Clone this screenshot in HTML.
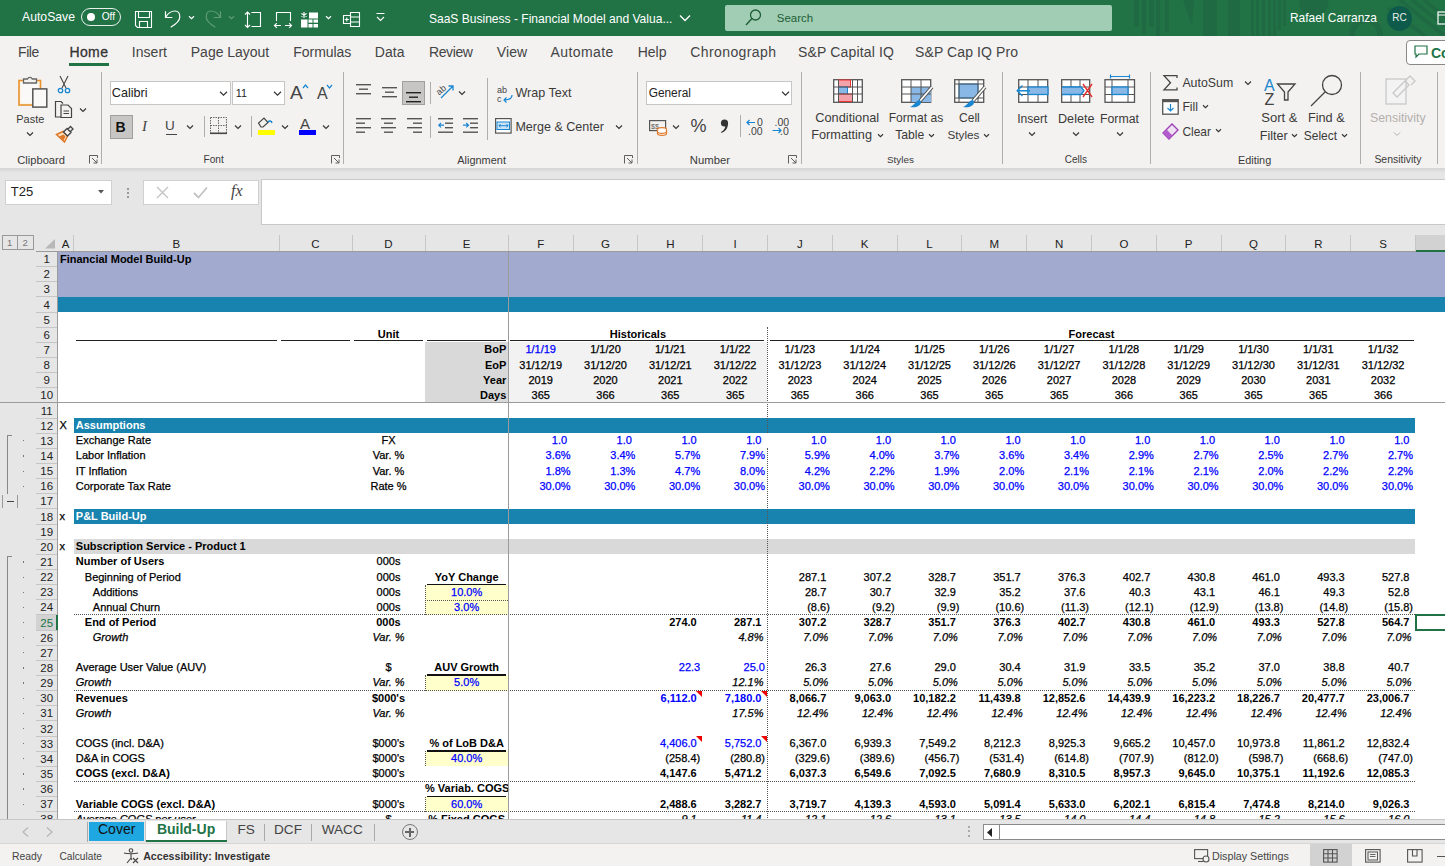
<!DOCTYPE html>
<html><head><meta charset="utf-8"><style>
*{margin:0;padding:0}
html,body{width:1445px;height:866px;overflow:hidden;background:#e6e6e6;position:relative;font-family:"Liberation Sans",sans-serif}
.a{position:absolute;white-space:nowrap}
.r{position:absolute}
.c{position:absolute;height:15.14px;line-height:15.14px;font-size:11px;color:#000;white-space:nowrap;overflow:visible;-webkit-text-stroke:0.25px currentColor}
.b{font-weight:bold;-webkit-text-stroke:0}
.i{font-style:italic}
svg{position:absolute;overflow:visible}

.tb{left:0;top:0;width:1445px;height:36px;background:#217346}
.rib{left:0;top:36px;width:1445px;height:132px;background:#f3f2f1}
.menu{font-size:14px;color:#444;top:43px;line-height:18px}
.lbl{font-size:12px;color:#3b3a39;line-height:14px}
.sep{position:absolute;width:1px;background:#b0aeac}
.wt{color:#fff}
</style></head>
<body>
<div class="r tb"></div>
<div class="r" style="left:1134.3px;top:0;width:4.4px;height:27px;background:#1f6a42"></div>
<div class="r" style="left:1142.2px;top:0;width:3.8px;height:34px;background:#1f6a42"></div>
<div class="r" style="left:1149.3px;top:0;width:4.3px;height:27px;background:#1f6a42"></div>
<div class="r" style="left:1156.4px;top:0;width:4.1px;height:36px;background:#1f6a42"></div>
<div class="r" style="left:1164.8px;top:0;width:4.0px;height:32px;background:#1f6a42"></div>
<div class="r" style="left:1203.4px;top:0;width:13.7px;height:36px;background:#1f6a42"></div>
<div class="r" style="left:1227.7px;top:0;width:12.5px;height:36px;background:#1f6a42"></div>
<div class="r" style="left:1250.8px;top:0;width:3.1px;height:36px;background:#1f6a42"></div>
<div class="r" style="left:1256.4px;top:0;width:3.1px;height:36px;background:#1f6a42"></div>
<div class="r" style="left:1262px;top:0;width:3.0px;height:36px;background:#1f6a42"></div>
<div class="r" style="left:1267.6px;top:0;width:3.1px;height:36px;background:#1f6a42"></div>
<div class="r" style="left:1272.5px;top:0;width:3.2px;height:36px;background:#1f6a42"></div>
<div class="r" style="left:1278px;top:0;width:2.5px;height:30px;background:#1f6a42"></div>
<div class="r" style="left:1283px;top:0;width:2.5px;height:26px;background:#1f6a42"></div>
<svg style="left:1120px;top:0" width="325" height="36" viewBox="0 0 325 36"><path d="M63 0 H74 L72 25 Z" fill="#1f6a42"/><circle cx="194" cy="2" r="14.5" fill="#1f6a42"/><circle cx="246" cy="34" r="14" fill="none" stroke="#1f6a42" stroke-width="6"/><path d="M280 0 L325 36 M292 0 L325 26 M304 0 L325 17 M268 8 L305 36" stroke="#1f6a42" stroke-width="4"/></svg>
<div class="a" style="left:22px;top:7.40px;line-height:20px;font-size:12.22px;color:#fff;font-weight:normal;font-style:normal;">AutoSave</div>
<div class="r" style="left:81.3px;top:8.2px;width:39.5px;height:17.4px;border:1.5px solid #e8f0ec;border-radius:9px;box-sizing:border-box"></div>
<div class="r" style="left:86.5px;top:13px;width:8px;height:8px;border-radius:50%;background:#fff"></div>
<div class="a" style="left:101.7px;top:7.00px;line-height:20px;font-size:10.11px;color:#fff;font-weight:normal;font-style:normal;">Off</div>
<svg style="left:134px;top:10px;" width="19" height="19" viewBox="0 0 19 19"><path d="M1.5 1.5 H17.5 V17.5 H3.5 L1.5 15.5 Z M4.5 1.5 V7.5 H15.5 V1.5 M5.5 17.5 V11.5 H13.5 V17.5" fill="none" stroke="#fff" stroke-width="1.1"/></svg>
<svg style="left:164px;top:10px;" width="18" height="19" viewBox="0 0 18 19"><path d="M1.5 1.3 V7.5 H8.3 M1.8 7.2 C4 3 7.5 1 11 1 C14 1 15.8 3.5 15.8 7 C15.8 10 13 13.5 6.7 17.3" fill="none" stroke="#fff" stroke-width="1.2"/></svg>
<svg style="left:187.5px;top:14.5px" width="7.0" height="5.0" viewBox="0 0 7.0 5.0"><path d="M1 1.25 L3.5 3.75 L6.0 1.25" fill="none" stroke="#fff" stroke-width="1.2"/></svg>
<svg style="left:204px;top:10px;" width="18" height="19" viewBox="0 0 18 19"><g transform="translate(18,0) scale(-1,1)"><path d="M1.5 1.3 V7.5 H8.3 M1.8 7.2 C4 3 7.5 1 11 1 C14 1 15.8 3.5 15.8 7 C15.8 10 13 13.5 6.7 17.3" fill="none" stroke="#5f9c79" stroke-width="1.2"/></g></svg>
<svg style="left:227.5px;top:14.5px" width="7.0" height="5.0" viewBox="0 0 7.0 5.0"><path d="M1 1.25 L3.5 3.75 L6.0 1.25" fill="none" stroke="#5f9c79" stroke-width="1.2"/></svg>
<svg style="left:244px;top:10px;" width="19" height="19" viewBox="0 0 19 19"><path d="M3.5 2 V17.5 M1 4.5 L3.5 2 L6 4.5 M1 15 L3.5 17.5 L6 15 M7.5 2.5 H16.5 V16.5 H7.5" fill="none" stroke="#fff" stroke-width="1.1"/></svg>
<svg style="left:273px;top:10px;" width="20" height="19" viewBox="0 0 20 19"><path d="M3.5 11 V2.5 H17.5 V11" fill="none" stroke="#fff" stroke-width="1.1"/><path d="M1.5 15.5 H8 M3.8 13.2 L1.5 15.5 L3.8 17.8 M12 15.5 H18.5 M16.2 13.2 L18.5 15.5 L16.2 17.8" fill="none" stroke="#fff" stroke-width="1.1"/></svg>
<svg style="left:300px;top:10px;" width="19" height="19" viewBox="0 0 19 19"><rect x="9" y="2.5" width="9" height="6" fill="#fff"/><path d="M4 2 V8 M1.4 3.5 L6.6 6.5 M1.4 6.5 L6.6 3.5" stroke="#fff" stroke-width="1.1"/><rect x="1" y="9.5" width="6.5" height="8" fill="#fff"/><rect x="8.5" y="9.5" width="4" height="3.2" fill="#fff"/><rect x="13.5" y="9.5" width="4.5" height="3.2" fill="#fff"/><rect x="8.5" y="14" width="4" height="3.5" fill="#fff"/><rect x="13.5" y="14" width="4.5" height="3.5" fill="#fff"/></svg>
<svg style="left:324.5px;top:14.5px" width="7.0" height="5.0" viewBox="0 0 7.0 5.0"><path d="M1 1.25 L3.5 3.75 L6.0 1.25" fill="none" stroke="#fff" stroke-width="1.2"/></svg>
<svg style="left:342px;top:10px;" width="19" height="19" viewBox="0 0 19 19"><path d="M8.5 2.5 H17.5 V16.5 H8.5 Z M8.5 7 H17.5 M8.5 12 H17.5" fill="none" stroke="#fff" stroke-width="1.1"/><path d="M8 5.5 H1.5 V13.5 H8" fill="none" stroke="#fff" stroke-width="1.1"/><path d="M4.8 7.5 V11.5 M2.8 9.5 H6.8" stroke="#fff" stroke-width="1.1"/></svg>
<svg style="left:376px;top:12px;" width="9" height="11" viewBox="0 0 9 11"><path d="M0.5 1.5 H8.5 M1 5 L4.5 8.5 L8 5" fill="none" stroke="#fff" stroke-width="1.1"/></svg>
<div class="a" style="left:428.9px;top:9.00px;line-height:20px;font-size:12.05px;color:#fff;font-weight:normal;font-style:normal;">SaaS Business - Financial Model and Valua...</div>
<svg style="left:678.5px;top:13px" width="12" height="10" viewBox="0 0 12 10"><path d="M1 2.5 L6 7.5 L11 2.5" fill="none" stroke="#fff" stroke-width="1.3"/></svg>
<div class="r" style="left:725px;top:5px;width:387px;height:26px;background:#a0cdb3;border-radius:2px"></div>
<svg style="left:745px;top:9px;" width="16" height="17" viewBox="0 0 16 17"><circle cx="10.5" cy="6" r="5" fill="none" stroke="#1e5d38" stroke-width="1.3"/><path d="M7 9.5 L1 16" stroke="#1e5d38" stroke-width="1.4"/></svg>
<div class="a" style="left:776.8px;top:8.00px;line-height:20px;font-size:11.49px;color:#1e5d38;font-weight:normal;font-style:normal;">Search</div>
<div class="a" style="left:1290px;top:8.00px;line-height:20px;font-size:11.95px;color:#fff;font-weight:normal;font-style:normal;">Rafael Carranza</div>
<div class="r" style="left:1387px;top:5.5px;width:25px;height:25px;border-radius:50%;background:#0f5b4b"></div>
<div class="a" style="left:1387px;top:11px;width:25px;text-align:center;font-size:10px;line-height:14px;color:#e8f0ec">RC</div>
<svg style="left:1437px;top:11px;" width="10" height="14" viewBox="0 0 10 14"><rect x="1" y="1" width="12" height="12" fill="none" stroke="#fff" stroke-width="1.2"/><path d="M1 4 H13" stroke="#fff"/></svg>
<div class="r rib"></div>
<div class="a menu" style="left:18px;color:#444;letter-spacing:-0.40px;">File</div>
<div class="a menu" style="left:69.4px;color:#333;letter-spacing:0.40px;-webkit-text-stroke:0.3px #333;">Home</div>
<div class="a menu" style="left:131.7px;color:#444;letter-spacing:0.06px;">Insert</div>
<div class="a menu" style="left:190.8px;color:#444;letter-spacing:-0.02px;">Page Layout</div>
<div class="a menu" style="left:293.3px;color:#444;letter-spacing:-0.05px;">Formulas</div>
<div class="a menu" style="left:374.7px;color:#444;letter-spacing:0.08px;">Data</div>
<div class="a menu" style="left:429px;color:#444;letter-spacing:-0.40px;">Review</div>
<div class="a menu" style="left:496.7px;color:#444;letter-spacing:0.14px;">View</div>
<div class="a menu" style="left:550.6px;color:#444;letter-spacing:0.40px;">Automate</div>
<div class="a menu" style="left:637.7px;color:#444;letter-spacing:0.00px;">Help</div>
<div class="a menu" style="left:690.3px;color:#444;letter-spacing:0.40px;">Chronograph</div>
<div class="a menu" style="left:798px;color:#444;letter-spacing:0.16px;">S&amp;P Capital IQ</div>
<div class="a menu" style="left:915px;color:#444;letter-spacing:0.10px;">S&amp;P Cap IQ Pro</div>
<div class="r" style="left:69px;top:63px;width:40px;height:3px;background:#217346"></div>
<div class="r" style="left:1405.5px;top:39.5px;width:60px;height:25px;background:#fff;border:1px solid #8a8886;border-radius:4px;box-sizing:border-box"></div>
<svg style="left:1414px;top:45px;" width="14" height="13" viewBox="0 0 14 13"><path d="M1 1 H13 V9 H5 L2 12 V9 H1 Z" fill="none" stroke="#217346" stroke-width="1.2"/></svg>
<div class="a" style="left:1431px;top:44.5px;font-size:14px;line-height:16px;color:#217346;"><b>Co</b></div>
<div class="sep" style="left:101px;top:72px;height:92px"></div>
<div class="sep" style="left:343px;top:72px;height:92px"></div>
<div class="sep" style="left:637px;top:72px;height:92px"></div>
<div class="sep" style="left:800.5px;top:72px;height:92px"></div>
<div class="sep" style="left:1001.5px;top:72px;height:92px"></div>
<div class="sep" style="left:1149.5px;top:72px;height:92px"></div>
<div class="sep" style="left:1360px;top:72px;height:92px"></div>
<div class="sep" style="left:1437px;top:72px;height:92px"></div>
<div class="a" style="left:17.3px;top:150.00px;line-height:20px;font-size:11.14px;color:#3b3a39;font-weight:normal;font-style:normal;">Clipboard</div>
<div class="a" style="left:203.5px;top:150.00px;line-height:20px;font-size:10.10px;color:#3b3a39;font-weight:normal;font-style:normal;">Font</div>
<div class="a" style="left:457.3px;top:150.00px;line-height:20px;font-size:10.95px;color:#3b3a39;font-weight:normal;font-style:normal;">Alignment</div>
<div class="a" style="left:689.8px;top:150.00px;line-height:20px;font-size:11.30px;color:#3b3a39;font-weight:normal;font-style:normal;">Number</div>
<div class="a" style="left:887px;top:150.00px;line-height:20px;font-size:9.91px;color:#3b3a39;font-weight:normal;font-style:normal;">Styles</div>
<div class="a" style="left:1064.8px;top:150.00px;line-height:20px;font-size:9.99px;color:#3b3a39;font-weight:normal;font-style:normal;">Cells</div>
<div class="a" style="left:1238px;top:150.00px;line-height:20px;font-size:10.86px;color:#3b3a39;font-weight:normal;font-style:normal;">Editing</div>
<div class="a" style="left:1374.4px;top:150.00px;line-height:20px;font-size:10.46px;color:#3b3a39;font-weight:normal;font-style:normal;">Sensitivity</div>
<svg style="left:88.5px;top:155px;" width="9" height="9" viewBox="0 0 9 9"><path d="M0.5 8.5 V0.5 H8.5 V3 M3 3 L8 8 M4.5 8 H8 V4.5" fill="none" stroke="#605e5c" stroke-width="1"/></svg>
<svg style="left:330.5px;top:155px;" width="9" height="9" viewBox="0 0 9 9"><path d="M0.5 8.5 V0.5 H8.5 V3 M3 3 L8 8 M4.5 8 H8 V4.5" fill="none" stroke="#605e5c" stroke-width="1"/></svg>
<svg style="left:623.5px;top:155px;" width="9" height="9" viewBox="0 0 9 9"><path d="M0.5 8.5 V0.5 H8.5 V3 M3 3 L8 8 M4.5 8 H8 V4.5" fill="none" stroke="#605e5c" stroke-width="1"/></svg>
<svg style="left:787.5px;top:155px;" width="9" height="9" viewBox="0 0 9 9"><path d="M0.5 8.5 V0.5 H8.5 V3 M3 3 L8 8 M4.5 8 H8 V4.5" fill="none" stroke="#605e5c" stroke-width="1"/></svg>
<svg style="left:16px;top:75px;" width="33" height="34" viewBox="0 0 33 34"><rect x="3" y="5.5" width="21.5" height="24.5" fill="#fdf3e3" stroke="#e8922c" stroke-width="1.6"/><rect x="5" y="7.5" width="17.5" height="20.5" fill="#faf9f7"/><path d="M7.5 8 V4 H11.5 A2.6 2.6 0 0 1 16.3 4 H20.5 V8 Z" fill="#f3f2f1" stroke="#666" stroke-width="1.3"/><rect x="16.8" y="13.9" width="14" height="18.2" fill="#faf9f7" stroke="#555" stroke-width="1.5"/></svg>
<div class="a" style="left:16.3px;top:108.50px;line-height:20px;font-size:10.95px;color:#3b3a39;font-weight:normal;font-style:normal;">Paste</div>
<svg style="left:26px;top:131px" width="8" height="6" viewBox="0 0 8 6"><path d="M1 1.5 L4 4.5 L7 1.5" fill="none" stroke="#333" stroke-width="1.1"/></svg>
<svg style="left:56px;top:75px;" width="16" height="19" viewBox="0 0 16 19"><path d="M4 1 L10 13 M12 1 L6 13" stroke="#444" stroke-width="1.1" fill="none"/><circle cx="4.5" cy="15.5" r="2.2" fill="none" stroke="#1a86d0" stroke-width="1.3"/><circle cx="11.5" cy="15.5" r="2.2" fill="none" stroke="#1a86d0" stroke-width="1.3"/></svg>
<svg style="left:54px;top:100px;" width="20" height="19" viewBox="0 0 20 19"><path d="M9 17 H1.5 V1.5 H7 L9 3.5" fill="none" stroke="#444" stroke-width="1.2"/><path d="M7 5 H14 L17.5 8.5 V17.5 H7 Z M9.5 11 H15 M9.5 13.5 H15" fill="#f3f2f1" stroke="#444" stroke-width="1.2"/></svg>
<svg style="left:79px;top:107px" width="8" height="6" viewBox="0 0 8 6"><path d="M1 1.5 L4 4.5 L7 1.5" fill="none" stroke="#333" stroke-width="1.1"/></svg>
<svg style="left:55px;top:125px;" width="19" height="18" viewBox="0 0 19 18"><path d="M1.5 9.5 L8 6.5 L12.5 11 L9.5 17 Z" fill="#fbe3c4" stroke="#e07828" stroke-width="1.5"/><path d="M4 11.5 L8.5 9.5 L10.5 11.5 L8.5 15.5 Z" fill="#e07828"/><path d="M8.5 7 L12 3.5 L16 7.5 L12.5 11 Z M12.8 4.3 L15.5 1.5 L18 4 L15.2 6.8" fill="#f3f2f1" stroke="#444" stroke-width="1.3"/></svg>
<div class="r" style="left:109.5px;top:81px;width:121px;height:23.7px;background:#fff;border:1px solid #c8c6c4;box-sizing:border-box"></div>
<div class="a" style="left:111.8px;top:83.00px;line-height:20px;font-size:12.63px;color:#222;font-weight:normal;font-style:normal;">Calibri</div>
<svg style="left:219.0px;top:89.5px" width="9.0" height="7.0" viewBox="0 0 9.0 7.0"><path d="M1 1.75 L4.5 5.25 L8.0 1.75" fill="none" stroke="#333" stroke-width="1.1"/></svg>
<div class="r" style="left:232.4px;top:81px;width:52.2px;height:23.7px;background:#fff;border:1px solid #c8c6c4;box-sizing:border-box"></div>
<div class="a" style="left:235.8px;top:83.00px;line-height:20px;font-size:10.79px;color:#222;font-weight:normal;font-style:normal;">11</div>
<svg style="left:273.0px;top:89.5px" width="9.0" height="7.0" viewBox="0 0 9.0 7.0"><path d="M1 1.75 L4.5 5.25 L8.0 1.75" fill="none" stroke="#333" stroke-width="1.1"/></svg>
<div class="a" style="left:290px;top:82px;font-size:19px;line-height:21px;color:#444;">A</div>
<svg style="left:302px;top:84px;" width="7" height="5" viewBox="0 0 7 5"><path d="M1 4 L3.5 1 L6 4" fill="none" stroke="#1a86d0" stroke-width="1.2"/></svg>
<div class="a" style="left:317px;top:85px;font-size:16px;line-height:18px;color:#444;">A</div>
<svg style="left:326px;top:84px;" width="7" height="5" viewBox="0 0 7 5"><path d="M1 1 L3.5 4 L6 1" fill="none" stroke="#1a86d0" stroke-width="1.2"/></svg>
<div class="r" style="left:109.5px;top:114.5px;width:23.5px;height:24px;background:#c8c6c4;border:1px solid #a19f9d;box-sizing:border-box"></div>
<div class="a" style="left:115.5px;top:118.5px;font-size:14px;line-height:16px;color:#111;"><b>B</b></div>
<div class="a" style="left:142px;top:118px;font-size:15px;line-height:17px;color:#444;font-family:Liberation Serif;"><i>I</i></div>
<div class="a" style="left:165px;top:118px;font-size:13.5px;line-height:15.5px;color:#444;">U</div>
<div class="r" style="left:165.5px;top:134px;width:11px;height:1.4px;background:#444"></div>
<svg style="left:186px;top:123.5px" width="8" height="6" viewBox="0 0 8 6"><path d="M1 1.5 L4 4.5 L7 1.5" fill="none" stroke="#333" stroke-width="1.1"/></svg>
<div class="sep" style="left:203.5px;top:116px;height:21px"></div>
<svg style="left:210px;top:117px;" width="17" height="17" viewBox="0 0 17 17"><rect x="0.5" y="0.5" width="16" height="16" fill="none" stroke="#666" stroke-width="1" stroke-dasharray="1.5 1"/><path d="M8.5 0.5 V16.5 M0.5 8.5 H16.5" stroke="#666" stroke-width="1" stroke-dasharray="1.5 1"/><path d="M0 16.3 H17" stroke="#444" stroke-width="1.6"/></svg>
<svg style="left:233.5px;top:123.5px" width="8" height="6" viewBox="0 0 8 6"><path d="M1 1.5 L4 4.5 L7 1.5" fill="none" stroke="#333" stroke-width="1.1"/></svg>
<div class="sep" style="left:250.5px;top:116px;height:21px"></div>
<svg style="left:257px;top:117px;" width="18" height="14" viewBox="0 0 18 14"><path d="M4 10 L1.5 6 L7 1 L11 5.5 L6 10 Z" fill="none" stroke="#444" stroke-width="1.2"/><path d="M11 5 C12 3.5 14.5 3.5 15 6" fill="none" stroke="#1a86d0" stroke-width="1.4"/></svg>
<div class="r" style="left:257.5px;top:130.3px;width:17.2px;height:4.3px;background:#ffff00"></div>
<svg style="left:280.8px;top:123.5px" width="8" height="6" viewBox="0 0 8 6"><path d="M1 1.5 L4 4.5 L7 1.5" fill="none" stroke="#333" stroke-width="1.1"/></svg>
<div class="a" style="left:300px;top:115px;font-size:15px;line-height:17px;color:#444;">A</div>
<div class="r" style="left:299px;top:130.3px;width:17px;height:4.3px;background:#0000ff"></div>
<svg style="left:321.8px;top:123.5px" width="8" height="6" viewBox="0 0 8 6"><path d="M1 1.5 L4 4.5 L7 1.5" fill="none" stroke="#333" stroke-width="1.1"/></svg>
<svg style="left:356px;top:84px;" width="20" height="20" viewBox="0 0 20 20"><rect x="0" y="0.0" width="15" height="1.4" fill="#555"/><rect x="3" y="4.5" width="9" height="1.4" fill="#555"/><rect x="0" y="9.0" width="15" height="1.4" fill="#555"/></svg>
<svg style="left:381.5px;top:87px;" width="20" height="20" viewBox="0 0 20 20"><rect x="0" y="0.0" width="15" height="1.4" fill="#555"/><rect x="3" y="4.5" width="9" height="1.4" fill="#555"/><rect x="0" y="9.0" width="15" height="1.4" fill="#555"/></svg>
<div class="r" style="left:402.3px;top:81px;width:23.2px;height:24px;background:#c8c6c4;border:1px solid #a19f9d;box-sizing:border-box"></div>
<svg style="left:406px;top:91.5px;" width="20" height="20" viewBox="0 0 20 20"><rect x="0" y="0.0" width="15" height="1.4" fill="#222"/><rect x="3" y="4.5" width="9" height="1.4" fill="#222"/><rect x="0" y="9.0" width="15" height="1.4" fill="#222"/></svg>
<div class="sep" style="left:429.7px;top:82px;height:22px"></div>
<svg style="left:436px;top:82px;" width="19" height="17" viewBox="0 0 19 17"><text x="0" y="11" font-size="9" fill="#444" transform="rotate(-40 5 8)" font-family="Liberation Sans">ab</text><path d="M5 16 L17 4 M12.5 4 H17 V8.5" fill="none" stroke="#1a86d0" stroke-width="1.3"/></svg>
<svg style="left:457.5px;top:89.5px" width="8" height="6" viewBox="0 0 8 6"><path d="M1 1.5 L4 4.5 L7 1.5" fill="none" stroke="#333" stroke-width="1.1"/></svg>
<div class="sep" style="left:487.4px;top:78px;height:62px"></div>
<svg style="left:497px;top:85px;" width="17" height="18" viewBox="0 0 17 18"><text x="0" y="8" font-size="9" fill="#444" font-family="Liberation Sans">ab</text><text x="0" y="16.5" font-size="9" fill="#444" font-family="Liberation Sans">c</text><path d="M15 10 C15 14 12 15 7 15 M9.5 12.5 L7 15 L9.5 17.5" fill="none" stroke="#1a86d0" stroke-width="1.2"/></svg>
<div class="a" style="left:515.4px;top:83.30px;line-height:20px;font-size:12.56px;color:#3b3a39;font-weight:normal;font-style:normal;">Wrap Text</div>
<svg style="left:356px;top:118px;" width="20" height="20" viewBox="0 0 20 20"><rect x="0" y="0.0" width="15" height="1.4" fill="#555"/><rect x="0" y="4.5" width="9" height="1.4" fill="#555"/><rect x="0" y="9.0" width="15" height="1.4" fill="#555"/><rect x="0" y="13.5" width="9" height="1.4" fill="#555"/></svg>
<svg style="left:381px;top:118px;" width="20" height="20" viewBox="0 0 20 20"><rect x="0" y="0.0" width="15" height="1.4" fill="#555"/><rect x="3" y="4.5" width="9" height="1.4" fill="#555"/><rect x="0" y="9.0" width="15" height="1.4" fill="#555"/><rect x="3" y="13.5" width="9" height="1.4" fill="#555"/></svg>
<svg style="left:407px;top:118px;" width="20" height="20" viewBox="0 0 20 20"><rect x="0" y="0.0" width="15" height="1.4" fill="#555"/><rect x="6" y="4.5" width="9" height="1.4" fill="#555"/><rect x="0" y="9.0" width="15" height="1.4" fill="#555"/><rect x="6" y="13.5" width="9" height="1.4" fill="#555"/></svg>
<div class="sep" style="left:429.7px;top:116px;height:22px"></div>
<svg style="left:438px;top:118px;" width="16" height="16" viewBox="0 0 16 16"><rect x="0" y="0" width="15" height="1.4" fill="#555"/><rect x="7" y="4.5" width="8" height="1.4" fill="#555"/><rect x="7" y="9" width="8" height="1.4" fill="#555"/><rect x="0" y="13.5" width="15" height="1.4" fill="#555"/><path d="M6 7.2 H0.8 M3 5 L0.8 7.2 L3 9.4" fill="none" stroke="#1a86d0" stroke-width="1.2"/></svg>
<svg style="left:463px;top:118px;" width="16" height="16" viewBox="0 0 16 16"><rect x="0" y="0" width="15" height="1.4" fill="#555"/><rect x="7" y="4.5" width="8" height="1.4" fill="#555"/><rect x="7" y="9" width="8" height="1.4" fill="#555"/><rect x="0" y="13.5" width="15" height="1.4" fill="#555"/><path d="M0 7.2 H5.5 M3.3 5 L5.5 7.2 L3.3 9.4" fill="none" stroke="#1a86d0" stroke-width="1.2"/></svg>
<svg style="left:494.5px;top:117.5px;" width="17" height="16" viewBox="0 0 17 16"><rect x="0.6" y="0.6" width="15.5" height="14.5" fill="#fff" stroke="#555" stroke-width="1.2"/><rect x="2" y="4" width="12.5" height="7.5" fill="#cde4f6" stroke="#1a86d0" stroke-width="1"/><path d="M4 7.7 H13 M5.5 6 L4 7.7 L5.5 9.4 M11.5 6 L13 7.7 L11.5 9.4" fill="none" stroke="#1a86d0" stroke-width="1"/></svg>
<div class="a" style="left:515.4px;top:116.75px;line-height:20px;font-size:12.55px;color:#3b3a39;font-weight:normal;font-style:normal;">Merge &amp; Center</div>
<svg style="left:615.2px;top:123.5px" width="8" height="6" viewBox="0 0 8 6"><path d="M1 1.5 L4 4.5 L7 1.5" fill="none" stroke="#333" stroke-width="1.1"/></svg>
<div class="r" style="left:646.3px;top:81px;width:145.7px;height:23.7px;background:#fff;border:1px solid #c8c6c4;box-sizing:border-box"></div>
<div class="a" style="left:648.7px;top:83.00px;line-height:20px;font-size:11.86px;color:#222;font-weight:normal;font-style:normal;">General</div>
<svg style="left:781.0px;top:89.5px" width="9.0" height="7.0" viewBox="0 0 9.0 7.0"><path d="M1 1.75 L4.5 5.25 L8.0 1.75" fill="none" stroke="#333" stroke-width="1.1"/></svg>
<svg style="left:648.5px;top:120px;" width="19" height="16" viewBox="0 0 19 16"><rect x="0.6" y="0.6" width="16" height="10" fill="none" stroke="#555" stroke-width="1.2"/><text x="2" y="8.5" font-size="7" fill="#555" font-family="Liberation Sans">$$</text><ellipse cx="13" cy="9.5" rx="4.5" ry="1.8" fill="#fff" stroke="#e07828" stroke-width="1.2"/><path d="M8.5 9.5 V13.5 A4.5 1.8 0 0 0 17.5 13.5 V9.5 M8.5 11.5 A4.5 1.8 0 0 0 17.5 11.5" fill="#fff" stroke="#e07828" stroke-width="1.2"/></svg>
<svg style="left:672.4px;top:123.5px" width="8" height="6" viewBox="0 0 8 6"><path d="M1 1.5 L4 4.5 L7 1.5" fill="none" stroke="#333" stroke-width="1.1"/></svg>
<div class="a" style="left:690.5px;top:116px;font-size:18px;line-height:20px;color:#444;">%</div>
<svg style="left:719px;top:119px;" width="11" height="15" viewBox="0 0 11 15"><circle cx="5.5" cy="4" r="3.6" fill="#333"/><path d="M8.8 4.5 C9.2 9 6.5 12.5 2.5 14 L2 13 C5 11.5 6.5 9 6.3 6 Z" fill="#333"/></svg>
<div class="sep" style="left:739.8px;top:115px;height:22px"></div>
<svg style="left:746px;top:118px;" width="19" height="17" viewBox="0 0 19 17"><text x="11" y="8" font-size="10.5" fill="#444" font-family="Liberation Sans">0</text><text x="2" y="16.5" font-size="10.5" fill="#444" font-family="Liberation Sans">.00</text><path d="M9 4.5 H1 M3.5 2 L1 4.5 L3.5 7" fill="none" stroke="#1a86d0" stroke-width="1.2"/></svg>
<svg style="left:771.5px;top:118px;" width="19" height="17" viewBox="0 0 19 17"><text x="2.5" y="8" font-size="10.5" fill="#444" font-family="Liberation Sans">.00</text><text x="8" y="16.5" font-size="10.5" fill="#444" font-family="Liberation Sans">.0</text><path d="M0.5 12.5 H9 M6.5 10 L9 12.5 L6.5 15" fill="none" stroke="#1a86d0" stroke-width="1.2"/></svg>
<svg style="left:833px;top:79px;" width="30" height="24" viewBox="0 0 30 24"><rect x="0.7" y="0.7" width="28.6" height="22.6" fill="#fff" stroke="#555" stroke-width="1.3"/><rect x="5.5" y="1" width="12" height="7" fill="#f4a2aa" stroke="#e33" stroke-width="1"/><rect x="5.5" y="8" width="9" height="7" fill="#8ab8e6" stroke="#1a86d0" stroke-width="1"/><rect x="5.5" y="15" width="14" height="7.5" fill="#f4a2aa" stroke="#e33" stroke-width="1"/><path d="M5.5 1 V23 M19.5 1 V23 M24.5 1 V23 M1 8 H29 M1 15 H29" stroke="#555" stroke-width="1" fill="none"/></svg>
<div class="a" style="left:815.3px;top:108.10px;line-height:20px;font-size:12.77px;color:#3b3a39;font-weight:normal;font-style:normal;">Conditional</div>
<div class="a" style="left:811.3px;top:125.00px;line-height:20px;font-size:12.70px;color:#3b3a39;font-weight:normal;font-style:normal;">Formatting</div>
<svg style="left:876.5px;top:132.5px" width="7.0" height="5.0" viewBox="0 0 7.0 5.0"><path d="M1 1.25 L3.5 3.75 L6.0 1.25" fill="none" stroke="#333" stroke-width="1.1"/></svg>
<svg style="left:901px;top:79px;" width="33" height="30" viewBox="0 0 33 30"><rect x="0.7" y="0.7" width="29" height="22.6" fill="#fff" stroke="#555" stroke-width="1.3"/><rect x="10" y="8" width="20" height="15" fill="#8ab8e6"/><path d="M10 1 V23 M20 1 V23 M1 8 H30 M1 15 H30" stroke="#555" stroke-width="1"/><path d="M31 8 L19 22" stroke="#555" stroke-width="3.5"/><path d="M31 8 L19 22" stroke="#fff" stroke-width="1.8"/><path d="M19 21 C15 21 14 26 9 28 C15 29 20 27 20 23 Z" fill="#1a86d0"/></svg>
<div class="a" style="left:888.7px;top:108.10px;line-height:20px;font-size:12.11px;color:#3b3a39;font-weight:normal;font-style:normal;">Format as</div>
<div class="a" style="left:895.2px;top:125.00px;line-height:20px;font-size:12.17px;color:#3b3a39;font-weight:normal;font-style:normal;">Table</div>
<svg style="left:928.0px;top:132.5px" width="7.0" height="5.0" viewBox="0 0 7.0 5.0"><path d="M1 1.25 L3.5 3.75 L6.0 1.25" fill="none" stroke="#333" stroke-width="1.1"/></svg>
<svg style="left:954px;top:79px;" width="33" height="30" viewBox="0 0 33 30"><rect x="0.7" y="0.7" width="29" height="22.6" fill="#fff" stroke="#555" stroke-width="1.3"/><rect x="5" y="5" width="19" height="14" fill="#8ab8e6" stroke="#1a86d0" stroke-width="1"/><path d="M5 1 V23 M24 1 V23 M1 5 H30 M1 19 H30" stroke="#555" stroke-width="1"/><path d="M31 8 L19 22" stroke="#555" stroke-width="3.5"/><path d="M31 8 L19 22" stroke="#fff" stroke-width="1.8"/><path d="M19 21 C15 21 14 26 9 28 C15 29 20 27 20 23 Z" fill="#1a86d0"/></svg>
<div class="a" style="left:959px;top:108.10px;line-height:20px;font-size:12.07px;color:#3b3a39;font-weight:normal;font-style:normal;">Cell</div>
<div class="a" style="left:947.5px;top:125.00px;line-height:20px;font-size:11.75px;color:#3b3a39;font-weight:normal;font-style:normal;">Styles</div>
<svg style="left:982.8px;top:132.5px" width="7.0" height="5.0" viewBox="0 0 7.0 5.0"><path d="M1 1.25 L3.5 3.75 L6.0 1.25" fill="none" stroke="#333" stroke-width="1.1"/></svg>
<svg style="left:1016px;top:79px;" width="34" height="24" viewBox="0 0 34 24"><rect x="2.7" y="0.7" width="29" height="22.6" fill="#fff" stroke="#555" stroke-width="1.3"/><path d="M12 1 V23 M22 1 V23 M3 8 H31 M3 15.5 H31" stroke="#555" stroke-width="1"/><rect x="12" y="8" width="20" height="7.5" fill="#8ab8e6" stroke="#1a86d0" stroke-width="1.3"/><path d="M14 11.7 H1.5 M6.5 6.5 L1.2 11.7 L6.5 17" fill="none" stroke="#1a86d0" stroke-width="1.4"/><path d="M14 11.7 H2" stroke="#fff" stroke-width="0.01"/></svg>
<div class="a" style="left:1017.2px;top:108.70px;line-height:20px;font-size:12.12px;color:#3b3a39;font-weight:normal;font-style:normal;">Insert</div>
<svg style="left:1027.8px;top:131px" width="8" height="6" viewBox="0 0 8 6"><path d="M1 1.5 L4 4.5 L7 1.5" fill="none" stroke="#333" stroke-width="1.1"/></svg>
<svg style="left:1059px;top:79px;" width="34" height="24" viewBox="0 0 34 24"><rect x="2.7" y="0.7" width="28" height="22.6" fill="#fff" stroke="#555" stroke-width="1.3"/><path d="M12 1 V23 M21 1 V23 M3 8 H31 M3 15.5 H31" stroke="#555" stroke-width="1"/><path d="M3 8 H22 L25 11.7 L22 15.5 H3" fill="#8ab8e6" stroke="#1a86d0" stroke-width="1.3"/><path d="M24 5 L33 18 M33 5 L24 18" stroke="#e83030" stroke-width="1.4"/></svg>
<div class="a" style="left:1058px;top:108.70px;line-height:20px;font-size:12.63px;color:#3b3a39;font-weight:normal;font-style:normal;">Delete</div>
<svg style="left:1072px;top:131px" width="8" height="6" viewBox="0 0 8 6"><path d="M1 1.5 L4 4.5 L7 1.5" fill="none" stroke="#333" stroke-width="1.1"/></svg>
<svg style="left:1104px;top:74px;" width="32" height="29" viewBox="0 0 32 29"><path d="M6.5 2.5 H25.5 M6.5 0.5 V4.5 M25.5 0.5 V4.5" stroke="#1a86d0" stroke-width="1.2"/><rect x="1" y="5.7" width="29.5" height="22.6" fill="#fff" stroke="#555" stroke-width="1.3"/><path d="M8 6 V28 M24 6 V28 M1 13 H31 M1 20.5 H31" stroke="#555" stroke-width="1"/><rect x="8" y="13" width="16" height="7.5" fill="#8ab8e6" stroke="#1a86d0" stroke-width="1.3"/></svg>
<div class="a" style="left:1100px;top:108.70px;line-height:20px;font-size:12.31px;color:#3b3a39;font-weight:normal;font-style:normal;">Format</div>
<svg style="left:1115.6px;top:131px" width="8" height="6" viewBox="0 0 8 6"><path d="M1 1.5 L4 4.5 L7 1.5" fill="none" stroke="#333" stroke-width="1.1"/></svg>
<svg style="left:1163px;top:75px;" width="15" height="16" viewBox="0 0 15 16"><path d="M14 3 V0.7 H1 L7.5 7.7 L1 14.8 H14 V12.5" fill="none" stroke="#444" stroke-width="1.3"/></svg>
<div class="a" style="left:1182.4px;top:73.00px;line-height:20px;font-size:12.35px;color:#3b3a39;font-weight:normal;font-style:normal;">AutoSum</div>
<svg style="left:1244px;top:80px" width="8" height="6" viewBox="0 0 8 6"><path d="M1 1.5 L4 4.5 L7 1.5" fill="none" stroke="#333" stroke-width="1.1"/></svg>
<svg style="left:1162px;top:99px;" width="17" height="16" viewBox="0 0 17 16"><rect x="0.7" y="0.7" width="15.5" height="14.5" fill="#fff" stroke="#555" stroke-width="1.3"/><rect x="0.7" y="0.7" width="15.5" height="2.5" fill="#555"/><path d="M8.5 5 V12 M5.5 9 L8.5 12 L11.5 9" fill="none" stroke="#1a86d0" stroke-width="1.2"/></svg>
<div class="a" style="left:1182.4px;top:96.80px;line-height:20px;font-size:12.21px;color:#3b3a39;font-weight:normal;font-style:normal;">Fill</div>
<svg style="left:1202.1px;top:103.5px" width="7.0" height="5.0" viewBox="0 0 7.0 5.0"><path d="M1 1.25 L3.5 3.75 L6.0 1.25" fill="none" stroke="#333" stroke-width="1.1"/></svg>
<svg style="left:1162px;top:123px;" width="17" height="16" viewBox="0 0 17 16"><path d="M1 10 L10 1 L16 7 L7 16 Z" fill="#f0e0f4" stroke="#9b3cb3" stroke-width="1.3"/><path d="M1 10 L4.5 6.5 L10.5 12.5 L7 16 Z" fill="#b35ccc"/></svg>
<div class="a" style="left:1182.4px;top:121.70px;line-height:20px;font-size:11.97px;color:#3b3a39;font-weight:normal;font-style:normal;">Clear</div>
<svg style="left:1215.0px;top:128.0px" width="7.0" height="5.0" viewBox="0 0 7.0 5.0"><path d="M1 1.25 L3.5 3.75 L6.0 1.25" fill="none" stroke="#333" stroke-width="1.1"/></svg>
<svg style="left:1264px;top:76px;" width="32" height="30" viewBox="0 0 32 30"><text x="0" y="14.5" font-size="16" fill="#1a86d0" font-family="Liberation Sans">A</text><text x="0.5" y="29" font-size="16" fill="#444" font-family="Liberation Sans">Z</text><path d="M13.5 8 H31 L24 16 V24 H20.5 V16 Z" fill="none" stroke="#444" stroke-width="1.3"/></svg>
<div class="a" style="left:1261.3px;top:108.40px;line-height:20px;font-size:13.06px;color:#3b3a39;font-weight:normal;font-style:normal;">Sort &amp;</div>
<div class="a" style="left:1259.8px;top:125.50px;line-height:20px;font-size:12.60px;color:#3b3a39;font-weight:normal;font-style:normal;">Filter</div>
<svg style="left:1291.3px;top:132.5px" width="7.0" height="5.0" viewBox="0 0 7.0 5.0"><path d="M1 1.25 L3.5 3.75 L6.0 1.25" fill="none" stroke="#333" stroke-width="1.1"/></svg>
<svg style="left:1310px;top:75px;" width="32" height="32" viewBox="0 0 32 32"><circle cx="22" cy="10" r="9.5" fill="none" stroke="#444" stroke-width="1.3"/><path d="M15 17 L1 31" stroke="#444" stroke-width="1.3"/></svg>
<div class="a" style="left:1308px;top:108.40px;line-height:20px;font-size:12.70px;color:#3b3a39;font-weight:normal;font-style:normal;">Find &amp;</div>
<div class="a" style="left:1303.8px;top:125.50px;line-height:20px;font-size:11.95px;color:#3b3a39;font-weight:normal;font-style:normal;">Select</div>
<svg style="left:1340.7px;top:132.5px" width="7.0" height="5.0" viewBox="0 0 7.0 5.0"><path d="M1 1.25 L3.5 3.75 L6.0 1.25" fill="none" stroke="#333" stroke-width="1.1"/></svg>
<svg style="left:1385px;top:75px;" width="31" height="31" viewBox="0 0 31 31"><rect x="1" y="4" width="20" height="25" fill="#f3f3f3" stroke="#c8c8c8" stroke-width="1.3"/><path d="M8 18 L20 6 L24 10 L12 22 Z M21 5 L25 1 L30 6 L26 10" fill="none" stroke="#c8c8c8" stroke-width="1.3"/></svg>
<div class="a" style="left:1370px;top:108.40px;line-height:20px;font-size:12.37px;color:#b3b0ad;font-weight:normal;font-style:normal;">Sensitivity</div>
<svg style="left:1393px;top:131px" width="8" height="6" viewBox="0 0 8 6"><path d="M1 1.5 L4 4.5 L7 1.5" fill="none" stroke="#b3b0ad" stroke-width="1"/></svg>
<div class="r" style="left:0;top:168px;width:1445px;height:5px;background:linear-gradient(#d4d4d4,#e6e6e6)"></div>
<div class="r" style="left:5px;top:179.5px;width:106.5px;height:25px;background:#fff;border:1px solid #d0d0d0;box-sizing:border-box"></div>
<div class="a" style="left:10.8px;top:182.00px;line-height:20px;font-size:13.00px;color:#222;font-weight:normal;font-style:normal;">T25</div>
<svg style="left:98.3px;top:190px;" width="6" height="3.5" viewBox="0 0 6 3.5"><path d="M0 0 H6 L3 3.5 Z" fill="#555"/></svg>
<div class="r" style="left:127px;top:187.5px;width:2px;height:2px;background:#999"></div>
<div class="r" style="left:127px;top:191.5px;width:2px;height:2px;background:#999"></div>
<div class="r" style="left:127px;top:195.5px;width:2px;height:2px;background:#999"></div>
<div class="r" style="left:143px;top:179.5px;width:115.5px;height:25px;background:#fff;border:1px solid #d0d0d0;box-sizing:border-box"></div>
<svg style="left:156px;top:186px;" width="13" height="13" viewBox="0 0 13 13"><path d="M1 1 L12 12 M12 1 L1 12" stroke="#c2c2c2" stroke-width="1.3"/></svg>
<svg style="left:193px;top:186px;" width="15" height="13" viewBox="0 0 15 13"><path d="M1 7 L5.5 11.5 L14 1.5" fill="none" stroke="#c2c2c2" stroke-width="1.8"/></svg>
<div class="a" style="left:231px;top:182px;font-size:16px;line-height:18px;color:#444;font-family:Liberation Serif;"><i>fx</i></div>
<div class="r" style="left:261px;top:179.3px;width:1190px;height:45.5px;background:#fff;border:1px solid #c8c8c8;box-sizing:border-box"></div>
<div class="r" style="left:0;top:234.6px;width:1445px;height:17px;background:#e6e6e6"></div>
<div class="r" style="left:35.8px;top:250.6px;width:1410px;height:1px;background:#9b9b9b"></div>
<svg style="left:45px;top:238.5px;" width="10" height="9.5" viewBox="0 0 10 9.5"><path d="M10 0 V9.5 H0 Z" fill="#b8b8b8"/></svg>
<div class="r" style="left:2px;top:234.8px;width:15.5px;height:15.7px;border:1px solid #999;box-sizing:border-box;background:#e6e6e6"></div>
<div class="r" style="left:17.5px;top:234.8px;width:16px;height:15.7px;border:1px solid #999;border-left:none;box-sizing:border-box;background:#e6e6e6"></div>
<div class="a" style="left:7px;top:236.5px;font-size:9.5px;line-height:11.5px;color:#777;">1</div>
<div class="a" style="left:22.5px;top:236.5px;font-size:9.5px;line-height:11.5px;color:#777;">2</div>
<div class="r" style="left:73.3px;top:235px;width:1px;height:16px;background:#c6c6c6"></div>
<div class="a" style="left:57.5px;width:16.299999999999997px;text-align:center;top:237px;font-size:11.5px;line-height:14px;color:#222">A</div>
<div class="r" style="left:278.5px;top:235px;width:1px;height:16px;background:#c6c6c6"></div>
<div class="a" style="left:73.8px;width:205.2px;text-align:center;top:237px;font-size:11.5px;line-height:14px;color:#222">B</div>
<div class="r" style="left:351.5px;top:235px;width:1px;height:16px;background:#c6c6c6"></div>
<div class="a" style="left:279px;width:73px;text-align:center;top:237px;font-size:11.5px;line-height:14px;color:#222">C</div>
<div class="r" style="left:424.5px;top:235px;width:1px;height:16px;background:#c6c6c6"></div>
<div class="a" style="left:352px;width:73px;text-align:center;top:237px;font-size:11.5px;line-height:14px;color:#222">D</div>
<div class="r" style="left:507.8px;top:235px;width:1px;height:16px;background:#c6c6c6"></div>
<div class="a" style="left:425px;width:83.30000000000001px;text-align:center;top:237px;font-size:11.5px;line-height:14px;color:#222">E</div>
<div class="r" style="left:572.6px;top:235px;width:1px;height:16px;background:#c6c6c6"></div>
<div class="a" style="left:508.3px;width:64.80000000000001px;text-align:center;top:237px;font-size:11.5px;line-height:14px;color:#222">F</div>
<div class="r" style="left:637.4px;top:235px;width:1px;height:16px;background:#c6c6c6"></div>
<div class="a" style="left:573.1px;width:64.79999999999995px;text-align:center;top:237px;font-size:11.5px;line-height:14px;color:#222">G</div>
<div class="r" style="left:702.1999999999999px;top:235px;width:1px;height:16px;background:#c6c6c6"></div>
<div class="a" style="left:637.9px;width:64.79999999999995px;text-align:center;top:237px;font-size:11.5px;line-height:14px;color:#222">H</div>
<div class="r" style="left:766.9999999999999px;top:235px;width:1px;height:16px;background:#c6c6c6"></div>
<div class="a" style="left:702.6999999999999px;width:64.79999999999995px;text-align:center;top:237px;font-size:11.5px;line-height:14px;color:#222">I</div>
<div class="r" style="left:831.7999999999998px;top:235px;width:1px;height:16px;background:#c6c6c6"></div>
<div class="a" style="left:767.4999999999999px;width:64.79999999999995px;text-align:center;top:237px;font-size:11.5px;line-height:14px;color:#222">J</div>
<div class="r" style="left:896.5999999999998px;top:235px;width:1px;height:16px;background:#c6c6c6"></div>
<div class="a" style="left:832.2999999999998px;width:64.79999999999995px;text-align:center;top:237px;font-size:11.5px;line-height:14px;color:#222">K</div>
<div class="r" style="left:961.3999999999997px;top:235px;width:1px;height:16px;background:#c6c6c6"></div>
<div class="a" style="left:897.0999999999998px;width:64.79999999999995px;text-align:center;top:237px;font-size:11.5px;line-height:14px;color:#222">L</div>
<div class="r" style="left:1026.1999999999998px;top:235px;width:1px;height:16px;background:#c6c6c6"></div>
<div class="a" style="left:961.8999999999997px;width:64.80000000000007px;text-align:center;top:237px;font-size:11.5px;line-height:14px;color:#222">M</div>
<div class="r" style="left:1090.9999999999998px;top:235px;width:1px;height:16px;background:#c6c6c6"></div>
<div class="a" style="left:1026.6999999999998px;width:64.79999999999995px;text-align:center;top:237px;font-size:11.5px;line-height:14px;color:#222">N</div>
<div class="r" style="left:1155.7999999999997px;top:235px;width:1px;height:16px;background:#c6c6c6"></div>
<div class="a" style="left:1091.4999999999998px;width:64.79999999999995px;text-align:center;top:237px;font-size:11.5px;line-height:14px;color:#222">O</div>
<div class="r" style="left:1220.5999999999997px;top:235px;width:1px;height:16px;background:#c6c6c6"></div>
<div class="a" style="left:1156.2999999999997px;width:64.79999999999995px;text-align:center;top:237px;font-size:11.5px;line-height:14px;color:#222">P</div>
<div class="r" style="left:1285.3999999999996px;top:235px;width:1px;height:16px;background:#c6c6c6"></div>
<div class="a" style="left:1221.0999999999997px;width:64.79999999999995px;text-align:center;top:237px;font-size:11.5px;line-height:14px;color:#222">Q</div>
<div class="r" style="left:1350.1999999999996px;top:235px;width:1px;height:16px;background:#c6c6c6"></div>
<div class="a" style="left:1285.8999999999996px;width:64.79999999999995px;text-align:center;top:237px;font-size:11.5px;line-height:14px;color:#222">R</div>
<div class="r" style="left:1414.9999999999995px;top:235px;width:1px;height:16px;background:#c6c6c6"></div>
<div class="a" style="left:1350.6999999999996px;width:64.79999999999995px;text-align:center;top:237px;font-size:11.5px;line-height:14px;color:#222">S</div>
<div class="r" style="left:1415.4999999999995px;top:235px;width:29.500000000000455px;height:16px;background:#d2d2d2"></div>
<div class="r" style="left:1415.4999999999995px;top:249.5px;width:29.500000000000455px;height:2px;background:#217346"></div>
<div class="r" style="left:0;top:251.56px;width:1445px;height:568.5px;background:#fff;overflow:hidden">
<div class="r" style="left:0;top:-251.56px;width:1445px;height:866px">
<div class="r" style="left:57.50px;top:251.56px;width:1387.50px;height:45.42px;background:#a2abcf;"></div>
<div class="r" style="left:57.50px;top:296.98px;width:1387.50px;height:15.14px;background:#1883ae;"></div>
<div class="r" style="left:425.00px;top:342.40px;width:83.30px;height:60.56px;background:#d9d9d9;"></div>
<div class="r" style="left:508.30px;top:342.40px;width:259.20px;height:60.56px;background:#f2f2f2;"></div>
<div class="r" style="left:73.80px;top:418.10px;width:1341.70px;height:15.14px;background:#1883ae;"></div>
<div class="r" style="left:73.80px;top:508.94px;width:1341.70px;height:15.14px;background:#1883ae;"></div>
<div class="r" style="left:73.80px;top:539.22px;width:1341.70px;height:15.14px;background:#d9d9d9;"></div>
<div class="r" style="left:425.00px;top:584.64px;width:83.30px;height:15.14px;background:#ffffcc;"></div>
<div class="r" style="left:425.00px;top:599.78px;width:83.30px;height:15.14px;background:#ffffcc;"></div>
<div class="r" style="left:425.00px;top:675.48px;width:83.30px;height:15.14px;background:#ffffcc;"></div>
<div class="r" style="left:425.00px;top:751.18px;width:83.30px;height:15.14px;background:#ffffcc;"></div>
<div class="r" style="left:425.00px;top:796.60px;width:83.30px;height:15.14px;background:#ffffcc;"></div>
<div class="c b" style="left:57.50px;top:251.56px;width:16.30px;text-align:left;padding-left:2.5px;box-sizing:border-box;width:300px;">Financial Model Build-Up</div>
<div class="r" style="left:75.80px;top:340.00px;width:201.20px;height:1.30px;background:#222;"></div>
<div class="r" style="left:281.00px;top:340.00px;width:69.00px;height:1.30px;background:#222;"></div>
<div class="r" style="left:354.00px;top:340.00px;width:69.00px;height:1.30px;background:#222;"></div>
<div class="r" style="left:427.00px;top:340.00px;width:79.30px;height:1.30px;background:#222;"></div>
<div class="r" style="left:510.30px;top:340.00px;width:254.20px;height:1.30px;background:#222;"></div>
<div class="r" style="left:770.00px;top:340.00px;width:643.50px;height:1.30px;background:#222;"></div>
<div class="c b" style="left:352.00px;top:327.26px;width:73.00px;text-align:center;">Unit</div>
<div class="c b" style="left:508.30px;top:327.26px;width:259.20px;text-align:center">Historicals</div>
<div class="c b" style="left:767.50px;top:327.26px;width:648.00px;text-align:center">Forecast</div>
<div class="c b" style="left:425.00px;top:342.40px;width:83.30px;text-align:right;padding-right:2px;box-sizing:border-box;">BoP</div>
<div class="c b" style="left:425.00px;top:357.54px;width:83.30px;text-align:right;padding-right:2px;box-sizing:border-box;">EoP</div>
<div class="c b" style="left:425.00px;top:372.68px;width:83.30px;text-align:right;padding-right:2px;box-sizing:border-box;">Year</div>
<div class="c b" style="left:425.00px;top:387.82px;width:83.30px;text-align:right;padding-right:2px;box-sizing:border-box;">Days</div>
<div class="c " style="left:508.30px;top:342.40px;width:64.80px;text-align:center;color:#0000ff;">1/1/19</div>
<div class="c " style="left:508.30px;top:357.54px;width:64.80px;text-align:center;">31/12/19</div>
<div class="c " style="left:508.30px;top:372.68px;width:64.80px;text-align:center;">2019</div>
<div class="c " style="left:508.30px;top:387.82px;width:64.80px;text-align:center;">365</div>
<div class="c " style="left:573.10px;top:342.40px;width:64.80px;text-align:center;">1/1/20</div>
<div class="c " style="left:573.10px;top:357.54px;width:64.80px;text-align:center;">31/12/20</div>
<div class="c " style="left:573.10px;top:372.68px;width:64.80px;text-align:center;">2020</div>
<div class="c " style="left:573.10px;top:387.82px;width:64.80px;text-align:center;">366</div>
<div class="c " style="left:637.90px;top:342.40px;width:64.80px;text-align:center;">1/1/21</div>
<div class="c " style="left:637.90px;top:357.54px;width:64.80px;text-align:center;">31/12/21</div>
<div class="c " style="left:637.90px;top:372.68px;width:64.80px;text-align:center;">2021</div>
<div class="c " style="left:637.90px;top:387.82px;width:64.80px;text-align:center;">365</div>
<div class="c " style="left:702.70px;top:342.40px;width:64.80px;text-align:center;">1/1/22</div>
<div class="c " style="left:702.70px;top:357.54px;width:64.80px;text-align:center;">31/12/22</div>
<div class="c " style="left:702.70px;top:372.68px;width:64.80px;text-align:center;">2022</div>
<div class="c " style="left:702.70px;top:387.82px;width:64.80px;text-align:center;">365</div>
<div class="c " style="left:767.50px;top:342.40px;width:64.80px;text-align:center;">1/1/23</div>
<div class="c " style="left:767.50px;top:357.54px;width:64.80px;text-align:center;">31/12/23</div>
<div class="c " style="left:767.50px;top:372.68px;width:64.80px;text-align:center;">2023</div>
<div class="c " style="left:767.50px;top:387.82px;width:64.80px;text-align:center;">365</div>
<div class="c " style="left:832.30px;top:342.40px;width:64.80px;text-align:center;">1/1/24</div>
<div class="c " style="left:832.30px;top:357.54px;width:64.80px;text-align:center;">31/12/24</div>
<div class="c " style="left:832.30px;top:372.68px;width:64.80px;text-align:center;">2024</div>
<div class="c " style="left:832.30px;top:387.82px;width:64.80px;text-align:center;">366</div>
<div class="c " style="left:897.10px;top:342.40px;width:64.80px;text-align:center;">1/1/25</div>
<div class="c " style="left:897.10px;top:357.54px;width:64.80px;text-align:center;">31/12/25</div>
<div class="c " style="left:897.10px;top:372.68px;width:64.80px;text-align:center;">2025</div>
<div class="c " style="left:897.10px;top:387.82px;width:64.80px;text-align:center;">365</div>
<div class="c " style="left:961.90px;top:342.40px;width:64.80px;text-align:center;">1/1/26</div>
<div class="c " style="left:961.90px;top:357.54px;width:64.80px;text-align:center;">31/12/26</div>
<div class="c " style="left:961.90px;top:372.68px;width:64.80px;text-align:center;">2026</div>
<div class="c " style="left:961.90px;top:387.82px;width:64.80px;text-align:center;">365</div>
<div class="c " style="left:1026.70px;top:342.40px;width:64.80px;text-align:center;">1/1/27</div>
<div class="c " style="left:1026.70px;top:357.54px;width:64.80px;text-align:center;">31/12/27</div>
<div class="c " style="left:1026.70px;top:372.68px;width:64.80px;text-align:center;">2027</div>
<div class="c " style="left:1026.70px;top:387.82px;width:64.80px;text-align:center;">365</div>
<div class="c " style="left:1091.50px;top:342.40px;width:64.80px;text-align:center;">1/1/28</div>
<div class="c " style="left:1091.50px;top:357.54px;width:64.80px;text-align:center;">31/12/28</div>
<div class="c " style="left:1091.50px;top:372.68px;width:64.80px;text-align:center;">2028</div>
<div class="c " style="left:1091.50px;top:387.82px;width:64.80px;text-align:center;">366</div>
<div class="c " style="left:1156.30px;top:342.40px;width:64.80px;text-align:center;">1/1/29</div>
<div class="c " style="left:1156.30px;top:357.54px;width:64.80px;text-align:center;">31/12/29</div>
<div class="c " style="left:1156.30px;top:372.68px;width:64.80px;text-align:center;">2029</div>
<div class="c " style="left:1156.30px;top:387.82px;width:64.80px;text-align:center;">365</div>
<div class="c " style="left:1221.10px;top:342.40px;width:64.80px;text-align:center;">1/1/30</div>
<div class="c " style="left:1221.10px;top:357.54px;width:64.80px;text-align:center;">31/12/30</div>
<div class="c " style="left:1221.10px;top:372.68px;width:64.80px;text-align:center;">2030</div>
<div class="c " style="left:1221.10px;top:387.82px;width:64.80px;text-align:center;">365</div>
<div class="c " style="left:1285.90px;top:342.40px;width:64.80px;text-align:center;">1/1/31</div>
<div class="c " style="left:1285.90px;top:357.54px;width:64.80px;text-align:center;">31/12/31</div>
<div class="c " style="left:1285.90px;top:372.68px;width:64.80px;text-align:center;">2031</div>
<div class="c " style="left:1285.90px;top:387.82px;width:64.80px;text-align:center;">365</div>
<div class="c " style="left:1350.70px;top:342.40px;width:64.80px;text-align:center;">1/1/32</div>
<div class="c " style="left:1350.70px;top:357.54px;width:64.80px;text-align:center;">31/12/32</div>
<div class="c " style="left:1350.70px;top:372.68px;width:64.80px;text-align:center;">2032</div>
<div class="c " style="left:1350.70px;top:387.82px;width:64.80px;text-align:center;">366</div>
<div class="c " style="left:57.50px;top:418.10px;width:16.30px;text-align:left;padding-left:2px;box-sizing:border-box;">X</div>
<div class="c b" style="left:73.80px;top:418.10px;width:205.20px;text-align:left;padding-left:2px;box-sizing:border-box;color:#fff;">Assumptions</div>
<div class="c " style="left:57.50px;top:508.94px;width:16.30px;text-align:left;padding-left:2px;box-sizing:border-box;">x</div>
<div class="c b" style="left:73.80px;top:508.94px;width:205.20px;text-align:left;padding-left:2px;box-sizing:border-box;color:#fff;width:200px;">P&amp;L Build-Up</div>
<div class="c " style="left:57.50px;top:539.22px;width:16.30px;text-align:left;padding-left:2px;box-sizing:border-box;">x</div>
<div class="c b" style="left:73.80px;top:539.22px;width:205.20px;text-align:left;padding-left:2px;box-sizing:border-box;width:300px;">Subscription Service - Product 1</div>
<div class="c " style="left:73.80px;top:433.24px;width:205.20px;text-align:left;padding-left:2px;box-sizing:border-box;">Exchange Rate</div>
<div class="c " style="left:352.00px;top:433.24px;width:73.00px;text-align:center;">FX</div>
<div class="c " style="left:508.30px;top:433.24px;width:64.80px;text-align:right;padding-right:6px;box-sizing:border-box;color:#0000ff;">1.0</div>
<div class="c " style="left:573.10px;top:433.24px;width:64.80px;text-align:right;padding-right:6px;box-sizing:border-box;color:#0000ff;">1.0</div>
<div class="c " style="left:637.90px;top:433.24px;width:64.80px;text-align:right;padding-right:6px;box-sizing:border-box;color:#0000ff;">1.0</div>
<div class="c " style="left:702.70px;top:433.24px;width:64.80px;text-align:right;padding-right:6px;box-sizing:border-box;color:#0000ff;">1.0</div>
<div class="c " style="left:767.50px;top:433.24px;width:64.80px;text-align:right;padding-right:6px;box-sizing:border-box;color:#0000ff;">1.0</div>
<div class="c " style="left:832.30px;top:433.24px;width:64.80px;text-align:right;padding-right:6px;box-sizing:border-box;color:#0000ff;">1.0</div>
<div class="c " style="left:897.10px;top:433.24px;width:64.80px;text-align:right;padding-right:6px;box-sizing:border-box;color:#0000ff;">1.0</div>
<div class="c " style="left:961.90px;top:433.24px;width:64.80px;text-align:right;padding-right:6px;box-sizing:border-box;color:#0000ff;">1.0</div>
<div class="c " style="left:1026.70px;top:433.24px;width:64.80px;text-align:right;padding-right:6px;box-sizing:border-box;color:#0000ff;">1.0</div>
<div class="c " style="left:1091.50px;top:433.24px;width:64.80px;text-align:right;padding-right:6px;box-sizing:border-box;color:#0000ff;">1.0</div>
<div class="c " style="left:1156.30px;top:433.24px;width:64.80px;text-align:right;padding-right:6px;box-sizing:border-box;color:#0000ff;">1.0</div>
<div class="c " style="left:1221.10px;top:433.24px;width:64.80px;text-align:right;padding-right:6px;box-sizing:border-box;color:#0000ff;">1.0</div>
<div class="c " style="left:1285.90px;top:433.24px;width:64.80px;text-align:right;padding-right:6px;box-sizing:border-box;color:#0000ff;">1.0</div>
<div class="c " style="left:1350.70px;top:433.24px;width:64.80px;text-align:right;padding-right:6px;box-sizing:border-box;color:#0000ff;">1.0</div>
<div class="c " style="left:73.80px;top:448.38px;width:205.20px;text-align:left;padding-left:2px;box-sizing:border-box;">Labor Inflation</div>
<div class="c " style="left:352.00px;top:448.38px;width:73.00px;text-align:center;">Var. %</div>
<div class="c " style="left:508.30px;top:448.38px;width:64.80px;text-align:right;padding-right:2.5px;box-sizing:border-box;color:#0000ff;">3.6%</div>
<div class="c " style="left:573.10px;top:448.38px;width:64.80px;text-align:right;padding-right:2.5px;box-sizing:border-box;color:#0000ff;">3.4%</div>
<div class="c " style="left:637.90px;top:448.38px;width:64.80px;text-align:right;padding-right:2.5px;box-sizing:border-box;color:#0000ff;">5.7%</div>
<div class="c " style="left:702.70px;top:448.38px;width:64.80px;text-align:right;padding-right:2.5px;box-sizing:border-box;color:#0000ff;">7.9%</div>
<div class="c " style="left:767.50px;top:448.38px;width:64.80px;text-align:right;padding-right:2.5px;box-sizing:border-box;color:#0000ff;">5.9%</div>
<div class="c " style="left:832.30px;top:448.38px;width:64.80px;text-align:right;padding-right:2.5px;box-sizing:border-box;color:#0000ff;">4.0%</div>
<div class="c " style="left:897.10px;top:448.38px;width:64.80px;text-align:right;padding-right:2.5px;box-sizing:border-box;color:#0000ff;">3.7%</div>
<div class="c " style="left:961.90px;top:448.38px;width:64.80px;text-align:right;padding-right:2.5px;box-sizing:border-box;color:#0000ff;">3.6%</div>
<div class="c " style="left:1026.70px;top:448.38px;width:64.80px;text-align:right;padding-right:2.5px;box-sizing:border-box;color:#0000ff;">3.4%</div>
<div class="c " style="left:1091.50px;top:448.38px;width:64.80px;text-align:right;padding-right:2.5px;box-sizing:border-box;color:#0000ff;">2.9%</div>
<div class="c " style="left:1156.30px;top:448.38px;width:64.80px;text-align:right;padding-right:2.5px;box-sizing:border-box;color:#0000ff;">2.7%</div>
<div class="c " style="left:1221.10px;top:448.38px;width:64.80px;text-align:right;padding-right:2.5px;box-sizing:border-box;color:#0000ff;">2.5%</div>
<div class="c " style="left:1285.90px;top:448.38px;width:64.80px;text-align:right;padding-right:2.5px;box-sizing:border-box;color:#0000ff;">2.7%</div>
<div class="c " style="left:1350.70px;top:448.38px;width:64.80px;text-align:right;padding-right:2.5px;box-sizing:border-box;color:#0000ff;">2.7%</div>
<div class="c " style="left:73.80px;top:463.52px;width:205.20px;text-align:left;padding-left:2px;box-sizing:border-box;">IT Inflation</div>
<div class="c " style="left:352.00px;top:463.52px;width:73.00px;text-align:center;">Var. %</div>
<div class="c " style="left:508.30px;top:463.52px;width:64.80px;text-align:right;padding-right:2.5px;box-sizing:border-box;color:#0000ff;">1.8%</div>
<div class="c " style="left:573.10px;top:463.52px;width:64.80px;text-align:right;padding-right:2.5px;box-sizing:border-box;color:#0000ff;">1.3%</div>
<div class="c " style="left:637.90px;top:463.52px;width:64.80px;text-align:right;padding-right:2.5px;box-sizing:border-box;color:#0000ff;">4.7%</div>
<div class="c " style="left:702.70px;top:463.52px;width:64.80px;text-align:right;padding-right:2.5px;box-sizing:border-box;color:#0000ff;">8.0%</div>
<div class="c " style="left:767.50px;top:463.52px;width:64.80px;text-align:right;padding-right:2.5px;box-sizing:border-box;color:#0000ff;">4.2%</div>
<div class="c " style="left:832.30px;top:463.52px;width:64.80px;text-align:right;padding-right:2.5px;box-sizing:border-box;color:#0000ff;">2.2%</div>
<div class="c " style="left:897.10px;top:463.52px;width:64.80px;text-align:right;padding-right:2.5px;box-sizing:border-box;color:#0000ff;">1.9%</div>
<div class="c " style="left:961.90px;top:463.52px;width:64.80px;text-align:right;padding-right:2.5px;box-sizing:border-box;color:#0000ff;">2.0%</div>
<div class="c " style="left:1026.70px;top:463.52px;width:64.80px;text-align:right;padding-right:2.5px;box-sizing:border-box;color:#0000ff;">2.1%</div>
<div class="c " style="left:1091.50px;top:463.52px;width:64.80px;text-align:right;padding-right:2.5px;box-sizing:border-box;color:#0000ff;">2.1%</div>
<div class="c " style="left:1156.30px;top:463.52px;width:64.80px;text-align:right;padding-right:2.5px;box-sizing:border-box;color:#0000ff;">2.1%</div>
<div class="c " style="left:1221.10px;top:463.52px;width:64.80px;text-align:right;padding-right:2.5px;box-sizing:border-box;color:#0000ff;">2.0%</div>
<div class="c " style="left:1285.90px;top:463.52px;width:64.80px;text-align:right;padding-right:2.5px;box-sizing:border-box;color:#0000ff;">2.2%</div>
<div class="c " style="left:1350.70px;top:463.52px;width:64.80px;text-align:right;padding-right:2.5px;box-sizing:border-box;color:#0000ff;">2.2%</div>
<div class="c " style="left:73.80px;top:478.66px;width:205.20px;text-align:left;padding-left:2px;box-sizing:border-box;">Corporate Tax Rate</div>
<div class="c " style="left:352.00px;top:478.66px;width:73.00px;text-align:center;">Rate %</div>
<div class="c " style="left:508.30px;top:478.66px;width:64.80px;text-align:right;padding-right:2.5px;box-sizing:border-box;color:#0000ff;">30.0%</div>
<div class="c " style="left:573.10px;top:478.66px;width:64.80px;text-align:right;padding-right:2.5px;box-sizing:border-box;color:#0000ff;">30.0%</div>
<div class="c " style="left:637.90px;top:478.66px;width:64.80px;text-align:right;padding-right:2.5px;box-sizing:border-box;color:#0000ff;">30.0%</div>
<div class="c " style="left:702.70px;top:478.66px;width:64.80px;text-align:right;padding-right:2.5px;box-sizing:border-box;color:#0000ff;">30.0%</div>
<div class="c " style="left:767.50px;top:478.66px;width:64.80px;text-align:right;padding-right:2.5px;box-sizing:border-box;color:#0000ff;">30.0%</div>
<div class="c " style="left:832.30px;top:478.66px;width:64.80px;text-align:right;padding-right:2.5px;box-sizing:border-box;color:#0000ff;">30.0%</div>
<div class="c " style="left:897.10px;top:478.66px;width:64.80px;text-align:right;padding-right:2.5px;box-sizing:border-box;color:#0000ff;">30.0%</div>
<div class="c " style="left:961.90px;top:478.66px;width:64.80px;text-align:right;padding-right:2.5px;box-sizing:border-box;color:#0000ff;">30.0%</div>
<div class="c " style="left:1026.70px;top:478.66px;width:64.80px;text-align:right;padding-right:2.5px;box-sizing:border-box;color:#0000ff;">30.0%</div>
<div class="c " style="left:1091.50px;top:478.66px;width:64.80px;text-align:right;padding-right:2.5px;box-sizing:border-box;color:#0000ff;">30.0%</div>
<div class="c " style="left:1156.30px;top:478.66px;width:64.80px;text-align:right;padding-right:2.5px;box-sizing:border-box;color:#0000ff;">30.0%</div>
<div class="c " style="left:1221.10px;top:478.66px;width:64.80px;text-align:right;padding-right:2.5px;box-sizing:border-box;color:#0000ff;">30.0%</div>
<div class="c " style="left:1285.90px;top:478.66px;width:64.80px;text-align:right;padding-right:2.5px;box-sizing:border-box;color:#0000ff;">30.0%</div>
<div class="c " style="left:1350.70px;top:478.66px;width:64.80px;text-align:right;padding-right:2.5px;box-sizing:border-box;color:#0000ff;">30.0%</div>
<div class="c b" style="left:73.80px;top:554.36px;width:205.20px;text-align:left;padding-left:2px;box-sizing:border-box;width:200px;">Number of Users</div>
<div class="c " style="left:352.00px;top:554.36px;width:73.00px;text-align:center;">000s</div>
<div class="c " style="left:73.80px;top:569.50px;width:205.20px;text-align:left;padding-left:11px;box-sizing:border-box;width:200px;">Beginning of Period</div>
<div class="c " style="left:352.00px;top:569.50px;width:73.00px;text-align:center;">000s</div>
<div class="c b" style="left:425.00px;top:569.50px;width:83.30px;text-align:center;">YoY Change</div>
<div class="c " style="left:767.50px;top:569.50px;width:64.80px;text-align:right;padding-right:6px;box-sizing:border-box;">287.1</div>
<div class="c " style="left:832.30px;top:569.50px;width:64.80px;text-align:right;padding-right:6px;box-sizing:border-box;">307.2</div>
<div class="c " style="left:897.10px;top:569.50px;width:64.80px;text-align:right;padding-right:6px;box-sizing:border-box;">328.7</div>
<div class="c " style="left:961.90px;top:569.50px;width:64.80px;text-align:right;padding-right:6px;box-sizing:border-box;">351.7</div>
<div class="c " style="left:1026.70px;top:569.50px;width:64.80px;text-align:right;padding-right:6px;box-sizing:border-box;">376.3</div>
<div class="c " style="left:1091.50px;top:569.50px;width:64.80px;text-align:right;padding-right:6px;box-sizing:border-box;">402.7</div>
<div class="c " style="left:1156.30px;top:569.50px;width:64.80px;text-align:right;padding-right:6px;box-sizing:border-box;">430.8</div>
<div class="c " style="left:1221.10px;top:569.50px;width:64.80px;text-align:right;padding-right:6px;box-sizing:border-box;">461.0</div>
<div class="c " style="left:1285.90px;top:569.50px;width:64.80px;text-align:right;padding-right:6px;box-sizing:border-box;">493.3</div>
<div class="c " style="left:1350.70px;top:569.50px;width:64.80px;text-align:right;padding-right:6px;box-sizing:border-box;">527.8</div>
<div class="c " style="left:73.80px;top:584.64px;width:205.20px;text-align:left;padding-left:19px;box-sizing:border-box;width:200px;">Additions</div>
<div class="c " style="left:352.00px;top:584.64px;width:73.00px;text-align:center;">000s</div>
<div class="c " style="left:425.00px;top:584.64px;width:83.30px;text-align:center;color:#0000ff;">10.0%</div>
<div class="c " style="left:767.50px;top:584.64px;width:64.80px;text-align:right;padding-right:6px;box-sizing:border-box;">28.7</div>
<div class="c " style="left:832.30px;top:584.64px;width:64.80px;text-align:right;padding-right:6px;box-sizing:border-box;">30.7</div>
<div class="c " style="left:897.10px;top:584.64px;width:64.80px;text-align:right;padding-right:6px;box-sizing:border-box;">32.9</div>
<div class="c " style="left:961.90px;top:584.64px;width:64.80px;text-align:right;padding-right:6px;box-sizing:border-box;">35.2</div>
<div class="c " style="left:1026.70px;top:584.64px;width:64.80px;text-align:right;padding-right:6px;box-sizing:border-box;">37.6</div>
<div class="c " style="left:1091.50px;top:584.64px;width:64.80px;text-align:right;padding-right:6px;box-sizing:border-box;">40.3</div>
<div class="c " style="left:1156.30px;top:584.64px;width:64.80px;text-align:right;padding-right:6px;box-sizing:border-box;">43.1</div>
<div class="c " style="left:1221.10px;top:584.64px;width:64.80px;text-align:right;padding-right:6px;box-sizing:border-box;">46.1</div>
<div class="c " style="left:1285.90px;top:584.64px;width:64.80px;text-align:right;padding-right:6px;box-sizing:border-box;">49.3</div>
<div class="c " style="left:1350.70px;top:584.64px;width:64.80px;text-align:right;padding-right:6px;box-sizing:border-box;">52.8</div>
<div class="c " style="left:73.80px;top:599.78px;width:205.20px;text-align:left;padding-left:19px;box-sizing:border-box;width:200px;">Annual Churn</div>
<div class="c " style="left:352.00px;top:599.78px;width:73.00px;text-align:center;">000s</div>
<div class="c " style="left:425.00px;top:599.78px;width:83.30px;text-align:center;color:#0000ff;">3.0%</div>
<div class="c " style="left:767.50px;top:599.78px;width:64.80px;text-align:right;padding-right:2.5px;box-sizing:border-box;">(8.6)</div>
<div class="c " style="left:832.30px;top:599.78px;width:64.80px;text-align:right;padding-right:2.5px;box-sizing:border-box;">(9.2)</div>
<div class="c " style="left:897.10px;top:599.78px;width:64.80px;text-align:right;padding-right:2.5px;box-sizing:border-box;">(9.9)</div>
<div class="c " style="left:961.90px;top:599.78px;width:64.80px;text-align:right;padding-right:2.5px;box-sizing:border-box;">(10.6)</div>
<div class="c " style="left:1026.70px;top:599.78px;width:64.80px;text-align:right;padding-right:2.5px;box-sizing:border-box;">(11.3)</div>
<div class="c " style="left:1091.50px;top:599.78px;width:64.80px;text-align:right;padding-right:2.5px;box-sizing:border-box;">(12.1)</div>
<div class="c " style="left:1156.30px;top:599.78px;width:64.80px;text-align:right;padding-right:2.5px;box-sizing:border-box;">(12.9)</div>
<div class="c " style="left:1221.10px;top:599.78px;width:64.80px;text-align:right;padding-right:2.5px;box-sizing:border-box;">(13.8)</div>
<div class="c " style="left:1285.90px;top:599.78px;width:64.80px;text-align:right;padding-right:2.5px;box-sizing:border-box;">(14.8)</div>
<div class="c " style="left:1350.70px;top:599.78px;width:64.80px;text-align:right;padding-right:2.5px;box-sizing:border-box;">(15.8)</div>
<div class="c b" style="left:73.80px;top:614.92px;width:205.20px;text-align:left;padding-left:11px;box-sizing:border-box;width:200px;">End of Period</div>
<div class="c b" style="left:352.00px;top:614.92px;width:73.00px;text-align:center;">000s</div>
<div class="c b" style="left:637.90px;top:614.92px;width:64.80px;text-align:right;padding-right:6px;box-sizing:border-box;">274.0</div>
<div class="c b" style="left:702.70px;top:614.92px;width:64.80px;text-align:right;padding-right:6px;box-sizing:border-box;">287.1</div>
<div class="c b" style="left:767.50px;top:614.92px;width:64.80px;text-align:right;padding-right:6px;box-sizing:border-box;">307.2</div>
<div class="c b" style="left:832.30px;top:614.92px;width:64.80px;text-align:right;padding-right:6px;box-sizing:border-box;">328.7</div>
<div class="c b" style="left:897.10px;top:614.92px;width:64.80px;text-align:right;padding-right:6px;box-sizing:border-box;">351.7</div>
<div class="c b" style="left:961.90px;top:614.92px;width:64.80px;text-align:right;padding-right:6px;box-sizing:border-box;">376.3</div>
<div class="c b" style="left:1026.70px;top:614.92px;width:64.80px;text-align:right;padding-right:6px;box-sizing:border-box;">402.7</div>
<div class="c b" style="left:1091.50px;top:614.92px;width:64.80px;text-align:right;padding-right:6px;box-sizing:border-box;">430.8</div>
<div class="c b" style="left:1156.30px;top:614.92px;width:64.80px;text-align:right;padding-right:6px;box-sizing:border-box;">461.0</div>
<div class="c b" style="left:1221.10px;top:614.92px;width:64.80px;text-align:right;padding-right:6px;box-sizing:border-box;">493.3</div>
<div class="c b" style="left:1285.90px;top:614.92px;width:64.80px;text-align:right;padding-right:6px;box-sizing:border-box;">527.8</div>
<div class="c b" style="left:1350.70px;top:614.92px;width:64.80px;text-align:right;padding-right:6px;box-sizing:border-box;">564.7</div>
<div class="c i" style="left:73.80px;top:630.06px;width:205.20px;text-align:left;padding-left:19px;box-sizing:border-box;width:200px;">Growth</div>
<div class="c i" style="left:352.00px;top:630.06px;width:73.00px;text-align:center;">Var. %</div>
<div class="c i" style="left:702.70px;top:630.06px;width:64.80px;text-align:right;padding-right:4px;box-sizing:border-box;">4.8%</div>
<div class="c i" style="left:767.50px;top:630.06px;width:64.80px;text-align:right;padding-right:4px;box-sizing:border-box;">7.0%</div>
<div class="c i" style="left:832.30px;top:630.06px;width:64.80px;text-align:right;padding-right:4px;box-sizing:border-box;">7.0%</div>
<div class="c i" style="left:897.10px;top:630.06px;width:64.80px;text-align:right;padding-right:4px;box-sizing:border-box;">7.0%</div>
<div class="c i" style="left:961.90px;top:630.06px;width:64.80px;text-align:right;padding-right:4px;box-sizing:border-box;">7.0%</div>
<div class="c i" style="left:1026.70px;top:630.06px;width:64.80px;text-align:right;padding-right:4px;box-sizing:border-box;">7.0%</div>
<div class="c i" style="left:1091.50px;top:630.06px;width:64.80px;text-align:right;padding-right:4px;box-sizing:border-box;">7.0%</div>
<div class="c i" style="left:1156.30px;top:630.06px;width:64.80px;text-align:right;padding-right:4px;box-sizing:border-box;">7.0%</div>
<div class="c i" style="left:1221.10px;top:630.06px;width:64.80px;text-align:right;padding-right:4px;box-sizing:border-box;">7.0%</div>
<div class="c i" style="left:1285.90px;top:630.06px;width:64.80px;text-align:right;padding-right:4px;box-sizing:border-box;">7.0%</div>
<div class="c i" style="left:1350.70px;top:630.06px;width:64.80px;text-align:right;padding-right:4px;box-sizing:border-box;">7.0%</div>
<div class="c " style="left:73.80px;top:660.34px;width:205.20px;text-align:left;padding-left:2px;box-sizing:border-box;width:220px;">Average User Value (AUV)</div>
<div class="c " style="left:352.00px;top:660.34px;width:73.00px;text-align:center;">$</div>
<div class="c b" style="left:425.00px;top:660.34px;width:83.30px;text-align:center;">AUV Growth</div>
<div class="c " style="left:637.90px;top:660.34px;width:64.80px;text-align:right;padding-right:2.5px;box-sizing:border-box;color:#0000ff;">22.3</div>
<div class="c " style="left:702.70px;top:660.34px;width:64.80px;text-align:right;padding-right:2.5px;box-sizing:border-box;color:#0000ff;">25.0</div>
<div class="c " style="left:767.50px;top:660.34px;width:64.80px;text-align:right;padding-right:6px;box-sizing:border-box;">26.3</div>
<div class="c " style="left:832.30px;top:660.34px;width:64.80px;text-align:right;padding-right:6px;box-sizing:border-box;">27.6</div>
<div class="c " style="left:897.10px;top:660.34px;width:64.80px;text-align:right;padding-right:6px;box-sizing:border-box;">29.0</div>
<div class="c " style="left:961.90px;top:660.34px;width:64.80px;text-align:right;padding-right:6px;box-sizing:border-box;">30.4</div>
<div class="c " style="left:1026.70px;top:660.34px;width:64.80px;text-align:right;padding-right:6px;box-sizing:border-box;">31.9</div>
<div class="c " style="left:1091.50px;top:660.34px;width:64.80px;text-align:right;padding-right:6px;box-sizing:border-box;">33.5</div>
<div class="c " style="left:1156.30px;top:660.34px;width:64.80px;text-align:right;padding-right:6px;box-sizing:border-box;">35.2</div>
<div class="c " style="left:1221.10px;top:660.34px;width:64.80px;text-align:right;padding-right:6px;box-sizing:border-box;">37.0</div>
<div class="c " style="left:1285.90px;top:660.34px;width:64.80px;text-align:right;padding-right:6px;box-sizing:border-box;">38.8</div>
<div class="c " style="left:1350.70px;top:660.34px;width:64.80px;text-align:right;padding-right:6px;box-sizing:border-box;">40.7</div>
<div class="c i" style="left:73.80px;top:675.48px;width:205.20px;text-align:left;padding-left:2px;box-sizing:border-box;">Growth</div>
<div class="c i" style="left:352.00px;top:675.48px;width:73.00px;text-align:center;">Var. %</div>
<div class="c " style="left:425.00px;top:675.48px;width:83.30px;text-align:center;color:#0000ff;">5.0%</div>
<div class="c i" style="left:702.70px;top:675.48px;width:64.80px;text-align:right;padding-right:4px;box-sizing:border-box;">12.1%</div>
<div class="c i" style="left:767.50px;top:675.48px;width:64.80px;text-align:right;padding-right:4px;box-sizing:border-box;">5.0%</div>
<div class="c i" style="left:832.30px;top:675.48px;width:64.80px;text-align:right;padding-right:4px;box-sizing:border-box;">5.0%</div>
<div class="c i" style="left:897.10px;top:675.48px;width:64.80px;text-align:right;padding-right:4px;box-sizing:border-box;">5.0%</div>
<div class="c i" style="left:961.90px;top:675.48px;width:64.80px;text-align:right;padding-right:4px;box-sizing:border-box;">5.0%</div>
<div class="c i" style="left:1026.70px;top:675.48px;width:64.80px;text-align:right;padding-right:4px;box-sizing:border-box;">5.0%</div>
<div class="c i" style="left:1091.50px;top:675.48px;width:64.80px;text-align:right;padding-right:4px;box-sizing:border-box;">5.0%</div>
<div class="c i" style="left:1156.30px;top:675.48px;width:64.80px;text-align:right;padding-right:4px;box-sizing:border-box;">5.0%</div>
<div class="c i" style="left:1221.10px;top:675.48px;width:64.80px;text-align:right;padding-right:4px;box-sizing:border-box;">5.0%</div>
<div class="c i" style="left:1285.90px;top:675.48px;width:64.80px;text-align:right;padding-right:4px;box-sizing:border-box;">5.0%</div>
<div class="c i" style="left:1350.70px;top:675.48px;width:64.80px;text-align:right;padding-right:4px;box-sizing:border-box;">5.0%</div>
<div class="c b" style="left:73.80px;top:690.62px;width:205.20px;text-align:left;padding-left:2px;box-sizing:border-box;">Revenues</div>
<div class="c b" style="left:352.00px;top:690.62px;width:73.00px;text-align:center;">$000's</div>
<div class="c b" style="left:637.90px;top:690.62px;width:64.80px;text-align:right;padding-right:6px;box-sizing:border-box;color:#0000ff;">6,112.0</div>
<div class="c b" style="left:702.70px;top:690.62px;width:64.80px;text-align:right;padding-right:6px;box-sizing:border-box;color:#0000ff;">7,180.0</div>
<div class="c b" style="left:767.50px;top:690.62px;width:64.80px;text-align:right;padding-right:6px;box-sizing:border-box;">8,066.7</div>
<div class="c b" style="left:832.30px;top:690.62px;width:64.80px;text-align:right;padding-right:6px;box-sizing:border-box;">9,063.0</div>
<div class="c b" style="left:897.10px;top:690.62px;width:64.80px;text-align:right;padding-right:6px;box-sizing:border-box;">10,182.2</div>
<div class="c b" style="left:961.90px;top:690.62px;width:64.80px;text-align:right;padding-right:6px;box-sizing:border-box;">11,439.8</div>
<div class="c b" style="left:1026.70px;top:690.62px;width:64.80px;text-align:right;padding-right:6px;box-sizing:border-box;">12,852.6</div>
<div class="c b" style="left:1091.50px;top:690.62px;width:64.80px;text-align:right;padding-right:6px;box-sizing:border-box;">14,439.9</div>
<div class="c b" style="left:1156.30px;top:690.62px;width:64.80px;text-align:right;padding-right:6px;box-sizing:border-box;">16,223.2</div>
<div class="c b" style="left:1221.10px;top:690.62px;width:64.80px;text-align:right;padding-right:6px;box-sizing:border-box;">18,226.7</div>
<div class="c b" style="left:1285.90px;top:690.62px;width:64.80px;text-align:right;padding-right:6px;box-sizing:border-box;">20,477.7</div>
<div class="c b" style="left:1350.70px;top:690.62px;width:64.80px;text-align:right;padding-right:6px;box-sizing:border-box;">23,006.7</div>
<div class="c i" style="left:73.80px;top:705.76px;width:205.20px;text-align:left;padding-left:2px;box-sizing:border-box;">Growth</div>
<div class="c i" style="left:352.00px;top:705.76px;width:73.00px;text-align:center;">Var. %</div>
<div class="c i" style="left:702.70px;top:705.76px;width:64.80px;text-align:right;padding-right:4px;box-sizing:border-box;">17.5%</div>
<div class="c i" style="left:767.50px;top:705.76px;width:64.80px;text-align:right;padding-right:4px;box-sizing:border-box;">12.4%</div>
<div class="c i" style="left:832.30px;top:705.76px;width:64.80px;text-align:right;padding-right:4px;box-sizing:border-box;">12.4%</div>
<div class="c i" style="left:897.10px;top:705.76px;width:64.80px;text-align:right;padding-right:4px;box-sizing:border-box;">12.4%</div>
<div class="c i" style="left:961.90px;top:705.76px;width:64.80px;text-align:right;padding-right:4px;box-sizing:border-box;">12.4%</div>
<div class="c i" style="left:1026.70px;top:705.76px;width:64.80px;text-align:right;padding-right:4px;box-sizing:border-box;">12.4%</div>
<div class="c i" style="left:1091.50px;top:705.76px;width:64.80px;text-align:right;padding-right:4px;box-sizing:border-box;">12.4%</div>
<div class="c i" style="left:1156.30px;top:705.76px;width:64.80px;text-align:right;padding-right:4px;box-sizing:border-box;">12.4%</div>
<div class="c i" style="left:1221.10px;top:705.76px;width:64.80px;text-align:right;padding-right:4px;box-sizing:border-box;">12.4%</div>
<div class="c i" style="left:1285.90px;top:705.76px;width:64.80px;text-align:right;padding-right:4px;box-sizing:border-box;">12.4%</div>
<div class="c i" style="left:1350.70px;top:705.76px;width:64.80px;text-align:right;padding-right:4px;box-sizing:border-box;">12.4%</div>
<div class="c " style="left:73.80px;top:736.04px;width:205.20px;text-align:left;padding-left:2px;box-sizing:border-box;width:200px;">COGS (incl. D&amp;A)</div>
<div class="c " style="left:352.00px;top:736.04px;width:73.00px;text-align:center;">$000's</div>
<div class="c b" style="left:425.00px;top:736.04px;width:83.30px;text-align:center;">% of LoB D&amp;A</div>
<div class="c " style="left:637.90px;top:736.04px;width:64.80px;text-align:right;padding-right:6px;box-sizing:border-box;color:#0000ff;">4,406.0</div>
<div class="c " style="left:702.70px;top:736.04px;width:64.80px;text-align:right;padding-right:6px;box-sizing:border-box;color:#0000ff;">5,752.0</div>
<div class="c " style="left:767.50px;top:736.04px;width:64.80px;text-align:right;padding-right:6px;box-sizing:border-box;">6,367.0</div>
<div class="c " style="left:832.30px;top:736.04px;width:64.80px;text-align:right;padding-right:6px;box-sizing:border-box;">6,939.3</div>
<div class="c " style="left:897.10px;top:736.04px;width:64.80px;text-align:right;padding-right:6px;box-sizing:border-box;">7,549.2</div>
<div class="c " style="left:961.90px;top:736.04px;width:64.80px;text-align:right;padding-right:6px;box-sizing:border-box;">8,212.3</div>
<div class="c " style="left:1026.70px;top:736.04px;width:64.80px;text-align:right;padding-right:6px;box-sizing:border-box;">8,925.3</div>
<div class="c " style="left:1091.50px;top:736.04px;width:64.80px;text-align:right;padding-right:6px;box-sizing:border-box;">9,665.2</div>
<div class="c " style="left:1156.30px;top:736.04px;width:64.80px;text-align:right;padding-right:6px;box-sizing:border-box;">10,457.0</div>
<div class="c " style="left:1221.10px;top:736.04px;width:64.80px;text-align:right;padding-right:6px;box-sizing:border-box;">10,973.8</div>
<div class="c " style="left:1285.90px;top:736.04px;width:64.80px;text-align:right;padding-right:6px;box-sizing:border-box;">11,861.2</div>
<div class="c " style="left:1350.70px;top:736.04px;width:64.80px;text-align:right;padding-right:6px;box-sizing:border-box;">12,832.4</div>
<div class="c " style="left:73.80px;top:751.18px;width:205.20px;text-align:left;padding-left:2px;box-sizing:border-box;">D&amp;A in COGS</div>
<div class="c " style="left:352.00px;top:751.18px;width:73.00px;text-align:center;">$000's</div>
<div class="c " style="left:425.00px;top:751.18px;width:83.30px;text-align:center;color:#0000ff;">40.0%</div>
<div class="c " style="left:637.90px;top:751.18px;width:64.80px;text-align:right;padding-right:2.5px;box-sizing:border-box;">(258.4)</div>
<div class="c " style="left:702.70px;top:751.18px;width:64.80px;text-align:right;padding-right:2.5px;box-sizing:border-box;">(280.8)</div>
<div class="c " style="left:767.50px;top:751.18px;width:64.80px;text-align:right;padding-right:2.5px;box-sizing:border-box;">(329.6)</div>
<div class="c " style="left:832.30px;top:751.18px;width:64.80px;text-align:right;padding-right:2.5px;box-sizing:border-box;">(389.6)</div>
<div class="c " style="left:897.10px;top:751.18px;width:64.80px;text-align:right;padding-right:2.5px;box-sizing:border-box;">(456.7)</div>
<div class="c " style="left:961.90px;top:751.18px;width:64.80px;text-align:right;padding-right:2.5px;box-sizing:border-box;">(531.4)</div>
<div class="c " style="left:1026.70px;top:751.18px;width:64.80px;text-align:right;padding-right:2.5px;box-sizing:border-box;">(614.8)</div>
<div class="c " style="left:1091.50px;top:751.18px;width:64.80px;text-align:right;padding-right:2.5px;box-sizing:border-box;">(707.9)</div>
<div class="c " style="left:1156.30px;top:751.18px;width:64.80px;text-align:right;padding-right:2.5px;box-sizing:border-box;">(812.0)</div>
<div class="c " style="left:1221.10px;top:751.18px;width:64.80px;text-align:right;padding-right:2.5px;box-sizing:border-box;">(598.7)</div>
<div class="c " style="left:1285.90px;top:751.18px;width:64.80px;text-align:right;padding-right:2.5px;box-sizing:border-box;">(668.6)</div>
<div class="c " style="left:1350.70px;top:751.18px;width:64.80px;text-align:right;padding-right:2.5px;box-sizing:border-box;">(747.0)</div>
<div class="c b" style="left:73.80px;top:766.32px;width:205.20px;text-align:left;padding-left:2px;box-sizing:border-box;width:200px;">COGS (excl. D&amp;A)</div>
<div class="c " style="left:352.00px;top:766.32px;width:73.00px;text-align:center;">$000's</div>
<div class="c b" style="left:637.90px;top:766.32px;width:64.80px;text-align:right;padding-right:6px;box-sizing:border-box;">4,147.6</div>
<div class="c b" style="left:702.70px;top:766.32px;width:64.80px;text-align:right;padding-right:6px;box-sizing:border-box;">5,471.2</div>
<div class="c b" style="left:767.50px;top:766.32px;width:64.80px;text-align:right;padding-right:6px;box-sizing:border-box;">6,037.3</div>
<div class="c b" style="left:832.30px;top:766.32px;width:64.80px;text-align:right;padding-right:6px;box-sizing:border-box;">6,549.6</div>
<div class="c b" style="left:897.10px;top:766.32px;width:64.80px;text-align:right;padding-right:6px;box-sizing:border-box;">7,092.5</div>
<div class="c b" style="left:961.90px;top:766.32px;width:64.80px;text-align:right;padding-right:6px;box-sizing:border-box;">7,680.9</div>
<div class="c b" style="left:1026.70px;top:766.32px;width:64.80px;text-align:right;padding-right:6px;box-sizing:border-box;">8,310.5</div>
<div class="c b" style="left:1091.50px;top:766.32px;width:64.80px;text-align:right;padding-right:6px;box-sizing:border-box;">8,957.3</div>
<div class="c b" style="left:1156.30px;top:766.32px;width:64.80px;text-align:right;padding-right:6px;box-sizing:border-box;">9,645.0</div>
<div class="c b" style="left:1221.10px;top:766.32px;width:64.80px;text-align:right;padding-right:6px;box-sizing:border-box;">10,375.1</div>
<div class="c b" style="left:1285.90px;top:766.32px;width:64.80px;text-align:right;padding-right:6px;box-sizing:border-box;">11,192.6</div>
<div class="c b" style="left:1350.70px;top:766.32px;width:64.80px;text-align:right;padding-right:6px;box-sizing:border-box;">12,085.3</div>
<div class="c b" style="left:425.00px;top:781.46px;width:83.30px;text-align:center;white-space:nowrap;">% Variab. COGS</div>
<div class="c b" style="left:73.80px;top:796.60px;width:205.20px;text-align:left;padding-left:2px;box-sizing:border-box;width:220px;">Variable COGS (excl. D&amp;A)</div>
<div class="c " style="left:352.00px;top:796.60px;width:73.00px;text-align:center;">$000's</div>
<div class="c " style="left:425.00px;top:796.60px;width:83.30px;text-align:center;color:#0000ff;">60.0%</div>
<div class="c b" style="left:637.90px;top:796.60px;width:64.80px;text-align:right;padding-right:6px;box-sizing:border-box;">2,488.6</div>
<div class="c b" style="left:702.70px;top:796.60px;width:64.80px;text-align:right;padding-right:6px;box-sizing:border-box;">3,282.7</div>
<div class="c b" style="left:767.50px;top:796.60px;width:64.80px;text-align:right;padding-right:6px;box-sizing:border-box;">3,719.7</div>
<div class="c b" style="left:832.30px;top:796.60px;width:64.80px;text-align:right;padding-right:6px;box-sizing:border-box;">4,139.3</div>
<div class="c b" style="left:897.10px;top:796.60px;width:64.80px;text-align:right;padding-right:6px;box-sizing:border-box;">4,593.0</div>
<div class="c b" style="left:961.90px;top:796.60px;width:64.80px;text-align:right;padding-right:6px;box-sizing:border-box;">5,091.4</div>
<div class="c b" style="left:1026.70px;top:796.60px;width:64.80px;text-align:right;padding-right:6px;box-sizing:border-box;">5,633.0</div>
<div class="c b" style="left:1091.50px;top:796.60px;width:64.80px;text-align:right;padding-right:6px;box-sizing:border-box;">6,202.1</div>
<div class="c b" style="left:1156.30px;top:796.60px;width:64.80px;text-align:right;padding-right:6px;box-sizing:border-box;">6,815.4</div>
<div class="c b" style="left:1221.10px;top:796.60px;width:64.80px;text-align:right;padding-right:6px;box-sizing:border-box;">7,474.8</div>
<div class="c b" style="left:1285.90px;top:796.60px;width:64.80px;text-align:right;padding-right:6px;box-sizing:border-box;">8,214.0</div>
<div class="c b" style="left:1350.70px;top:796.60px;width:64.80px;text-align:right;padding-right:6px;box-sizing:border-box;">9,026.3</div>
<div class="c i" style="left:73.80px;top:811.74px;width:205.20px;text-align:left;padding-left:2px;box-sizing:border-box;width:220px;">Average COGS per user</div>
<div class="c " style="left:352.00px;top:811.74px;width:73.00px;text-align:center;">$</div>
<div class="c b" style="left:425.00px;top:811.74px;width:83.30px;text-align:center;">% Fixed COGS</div>
<div class="c i" style="left:637.90px;top:811.74px;width:64.80px;text-align:right;padding-right:6px;box-sizing:border-box;">9.1</div>
<div class="c i" style="left:702.70px;top:811.74px;width:64.80px;text-align:right;padding-right:6px;box-sizing:border-box;">11.4</div>
<div class="c i" style="left:767.50px;top:811.74px;width:64.80px;text-align:right;padding-right:6px;box-sizing:border-box;">12.1</div>
<div class="c i" style="left:832.30px;top:811.74px;width:64.80px;text-align:right;padding-right:6px;box-sizing:border-box;">12.6</div>
<div class="c i" style="left:897.10px;top:811.74px;width:64.80px;text-align:right;padding-right:6px;box-sizing:border-box;">13.1</div>
<div class="c i" style="left:961.90px;top:811.74px;width:64.80px;text-align:right;padding-right:6px;box-sizing:border-box;">13.5</div>
<div class="c i" style="left:1026.70px;top:811.74px;width:64.80px;text-align:right;padding-right:6px;box-sizing:border-box;">14.0</div>
<div class="c i" style="left:1091.50px;top:811.74px;width:64.80px;text-align:right;padding-right:6px;box-sizing:border-box;">14.4</div>
<div class="c i" style="left:1156.30px;top:811.74px;width:64.80px;text-align:right;padding-right:6px;box-sizing:border-box;">14.8</div>
<div class="c i" style="left:1221.10px;top:811.74px;width:64.80px;text-align:right;padding-right:6px;box-sizing:border-box;">15.2</div>
<div class="c i" style="left:1285.90px;top:811.74px;width:64.80px;text-align:right;padding-right:6px;box-sizing:border-box;">15.6</div>
<div class="c i" style="left:1350.70px;top:811.74px;width:64.80px;text-align:right;padding-right:6px;box-sizing:border-box;">16.0</div>
<div class="r" style="left:427.00px;top:583.64px;width:79.30px;height:1.60px;background:#111;"></div>
<div class="r" style="left:427.00px;top:674.48px;width:79.30px;height:1.60px;background:#111;"></div>
<div class="r" style="left:427.00px;top:750.18px;width:79.30px;height:1.60px;background:#111;"></div>
<div class="r" style="left:427.00px;top:795.60px;width:79.30px;height:1.60px;background:#111;"></div>
<div class="r" style="left:425.00px;top:584.64px;width:0;height:30.28px;border-left:1px dotted #555"></div>
<div class="r" style="left:425.00px;top:599.78px;width:83.30px;height:0;border-top:1px dotted #555"></div>
<div class="r" style="left:425.00px;top:675.48px;width:0;height:15.14px;border-left:1px dotted #555"></div>
<div class="r" style="left:425.00px;top:751.18px;width:0;height:15.14px;border-left:1px dotted #555"></div>
<div class="r" style="left:425.00px;top:796.60px;width:0;height:15.14px;border-left:1px dotted #555"></div>
<div class="r" style="left:73.80px;top:614.42px;width:1341.70px;height:0;border-top:1px dotted #555"></div>
<div class="r" style="left:73.80px;top:690.12px;width:1341.70px;height:0;border-top:1px dotted #555"></div>
<div class="r" style="left:73.80px;top:780.96px;width:1341.70px;height:0;border-top:1px dotted #555"></div>
<div class="r" style="left:73.80px;top:811.24px;width:1341.70px;height:0;border-top:1px dotted #555"></div>
<div class="r" style="left:767.00px;top:327.26px;width:0;height:105.98px;border-left:1px dotted #555"></div>
<div class="r" style="left:767.00px;top:448.38px;width:0;height:371.62px;border-left:1px dotted #555"></div>
<div class="r" style="left:695.70px;top:690.62px;width:0;height:0;border-left:6px solid transparent;border-top:6px solid #e00;"></div>
<div class="r" style="left:760.50px;top:690.62px;width:0;height:0;border-left:6px solid transparent;border-top:6px solid #e00;"></div>
<div class="r" style="left:695.70px;top:736.04px;width:0;height:0;border-left:6px solid transparent;border-top:6px solid #e00;"></div>
<div class="r" style="left:760.50px;top:736.04px;width:0;height:0;border-left:6px solid transparent;border-top:6px solid #e00;"></div>
</div>
</div>
<div class="r" style="left:0;top:251.56px;width:57.5px;height:568.5px;background:#e6e6e6"></div>
<div class="r" style="left:57px;top:251.56px;width:1px;height:568.5px;background:#9b9b9b"></div>
<div class="r" style="left:36px;top:266.20px;width:21px;height:1px;background:#c6c6c6"></div>
<div class="a" style="left:36px;width:21.5px;text-align:center;top:252.16px;font-size:11.5px;line-height:14px;color:#222">1</div>
<div class="r" style="left:36px;top:281.34px;width:21px;height:1px;background:#c6c6c6"></div>
<div class="a" style="left:36px;width:21.5px;text-align:center;top:267.30px;font-size:11.5px;line-height:14px;color:#222">2</div>
<div class="r" style="left:36px;top:296.48px;width:21px;height:1px;background:#c6c6c6"></div>
<div class="a" style="left:36px;width:21.5px;text-align:center;top:282.44px;font-size:11.5px;line-height:14px;color:#222">3</div>
<div class="r" style="left:36px;top:311.62px;width:21px;height:1px;background:#c6c6c6"></div>
<div class="a" style="left:36px;width:21.5px;text-align:center;top:297.58px;font-size:11.5px;line-height:14px;color:#222">4</div>
<div class="r" style="left:36px;top:326.76px;width:21px;height:1px;background:#c6c6c6"></div>
<div class="a" style="left:36px;width:21.5px;text-align:center;top:312.72px;font-size:11.5px;line-height:14px;color:#222">5</div>
<div class="r" style="left:36px;top:341.90px;width:21px;height:1px;background:#c6c6c6"></div>
<div class="a" style="left:36px;width:21.5px;text-align:center;top:327.86px;font-size:11.5px;line-height:14px;color:#222">6</div>
<div class="r" style="left:36px;top:357.04px;width:21px;height:1px;background:#c6c6c6"></div>
<div class="a" style="left:36px;width:21.5px;text-align:center;top:343.00px;font-size:11.5px;line-height:14px;color:#222">7</div>
<div class="r" style="left:36px;top:372.18px;width:21px;height:1px;background:#c6c6c6"></div>
<div class="a" style="left:36px;width:21.5px;text-align:center;top:358.14px;font-size:11.5px;line-height:14px;color:#222">8</div>
<div class="r" style="left:36px;top:387.32px;width:21px;height:1px;background:#c6c6c6"></div>
<div class="a" style="left:36px;width:21.5px;text-align:center;top:373.28px;font-size:11.5px;line-height:14px;color:#222">9</div>
<div class="r" style="left:36px;top:402.46px;width:21px;height:1px;background:#c6c6c6"></div>
<div class="a" style="left:36px;width:21.5px;text-align:center;top:388.42px;font-size:11.5px;line-height:14px;color:#222">10</div>
<div class="r" style="left:36px;top:417.60px;width:21px;height:1px;background:#c6c6c6"></div>
<div class="a" style="left:36px;width:21.5px;text-align:center;top:403.56px;font-size:11.5px;line-height:14px;color:#222">11</div>
<div class="r" style="left:36px;top:432.74px;width:21px;height:1px;background:#c6c6c6"></div>
<div class="a" style="left:36px;width:21.5px;text-align:center;top:418.70px;font-size:11.5px;line-height:14px;color:#222">12</div>
<div class="r" style="left:36px;top:447.88px;width:21px;height:1px;background:#c6c6c6"></div>
<div class="a" style="left:36px;width:21.5px;text-align:center;top:433.84px;font-size:11.5px;line-height:14px;color:#222">13</div>
<div class="r" style="left:36px;top:463.02px;width:21px;height:1px;background:#c6c6c6"></div>
<div class="a" style="left:36px;width:21.5px;text-align:center;top:448.98px;font-size:11.5px;line-height:14px;color:#222">14</div>
<div class="r" style="left:36px;top:478.16px;width:21px;height:1px;background:#c6c6c6"></div>
<div class="a" style="left:36px;width:21.5px;text-align:center;top:464.12px;font-size:11.5px;line-height:14px;color:#222">15</div>
<div class="r" style="left:36px;top:493.30px;width:21px;height:1px;background:#c6c6c6"></div>
<div class="a" style="left:36px;width:21.5px;text-align:center;top:479.26px;font-size:11.5px;line-height:14px;color:#222">16</div>
<div class="r" style="left:36px;top:508.44px;width:21px;height:1px;background:#c6c6c6"></div>
<div class="a" style="left:36px;width:21.5px;text-align:center;top:494.40px;font-size:11.5px;line-height:14px;color:#222">17</div>
<div class="r" style="left:36px;top:523.58px;width:21px;height:1px;background:#c6c6c6"></div>
<div class="a" style="left:36px;width:21.5px;text-align:center;top:509.54px;font-size:11.5px;line-height:14px;color:#222">18</div>
<div class="r" style="left:36px;top:538.72px;width:21px;height:1px;background:#c6c6c6"></div>
<div class="a" style="left:36px;width:21.5px;text-align:center;top:524.68px;font-size:11.5px;line-height:14px;color:#222">19</div>
<div class="r" style="left:36px;top:553.86px;width:21px;height:1px;background:#c6c6c6"></div>
<div class="a" style="left:36px;width:21.5px;text-align:center;top:539.82px;font-size:11.5px;line-height:14px;color:#222">20</div>
<div class="r" style="left:36px;top:569.00px;width:21px;height:1px;background:#c6c6c6"></div>
<div class="a" style="left:36px;width:21.5px;text-align:center;top:554.96px;font-size:11.5px;line-height:14px;color:#222">21</div>
<div class="r" style="left:36px;top:584.14px;width:21px;height:1px;background:#c6c6c6"></div>
<div class="a" style="left:36px;width:21.5px;text-align:center;top:570.10px;font-size:11.5px;line-height:14px;color:#222">22</div>
<div class="r" style="left:36px;top:599.28px;width:21px;height:1px;background:#c6c6c6"></div>
<div class="a" style="left:36px;width:21.5px;text-align:center;top:585.24px;font-size:11.5px;line-height:14px;color:#222">23</div>
<div class="r" style="left:36px;top:614.42px;width:21px;height:1px;background:#c6c6c6"></div>
<div class="a" style="left:36px;width:21.5px;text-align:center;top:600.38px;font-size:11.5px;line-height:14px;color:#222">24</div>
<div class="r" style="left:36px;top:614.92px;width:21px;height:15.14px;background:#d2d2d2"></div>
<div class="r" style="left:55.5px;top:614.92px;width:2px;height:15.14px;background:#217346"></div>
<div class="r" style="left:36px;top:629.56px;width:21px;height:1px;background:#c6c6c6"></div>
<div class="a" style="left:36px;width:21.5px;text-align:center;top:615.52px;font-size:11.5px;line-height:14px;color:#217346">25</div>
<div class="r" style="left:36px;top:644.70px;width:21px;height:1px;background:#c6c6c6"></div>
<div class="a" style="left:36px;width:21.5px;text-align:center;top:630.66px;font-size:11.5px;line-height:14px;color:#222">26</div>
<div class="r" style="left:36px;top:659.84px;width:21px;height:1px;background:#c6c6c6"></div>
<div class="a" style="left:36px;width:21.5px;text-align:center;top:645.80px;font-size:11.5px;line-height:14px;color:#222">27</div>
<div class="r" style="left:36px;top:674.98px;width:21px;height:1px;background:#c6c6c6"></div>
<div class="a" style="left:36px;width:21.5px;text-align:center;top:660.94px;font-size:11.5px;line-height:14px;color:#222">28</div>
<div class="r" style="left:36px;top:690.12px;width:21px;height:1px;background:#c6c6c6"></div>
<div class="a" style="left:36px;width:21.5px;text-align:center;top:676.08px;font-size:11.5px;line-height:14px;color:#222">29</div>
<div class="r" style="left:36px;top:705.26px;width:21px;height:1px;background:#c6c6c6"></div>
<div class="a" style="left:36px;width:21.5px;text-align:center;top:691.22px;font-size:11.5px;line-height:14px;color:#222">30</div>
<div class="r" style="left:36px;top:720.40px;width:21px;height:1px;background:#c6c6c6"></div>
<div class="a" style="left:36px;width:21.5px;text-align:center;top:706.36px;font-size:11.5px;line-height:14px;color:#222">31</div>
<div class="r" style="left:36px;top:735.54px;width:21px;height:1px;background:#c6c6c6"></div>
<div class="a" style="left:36px;width:21.5px;text-align:center;top:721.50px;font-size:11.5px;line-height:14px;color:#222">32</div>
<div class="r" style="left:36px;top:750.68px;width:21px;height:1px;background:#c6c6c6"></div>
<div class="a" style="left:36px;width:21.5px;text-align:center;top:736.64px;font-size:11.5px;line-height:14px;color:#222">33</div>
<div class="r" style="left:36px;top:765.82px;width:21px;height:1px;background:#c6c6c6"></div>
<div class="a" style="left:36px;width:21.5px;text-align:center;top:751.78px;font-size:11.5px;line-height:14px;color:#222">34</div>
<div class="r" style="left:36px;top:780.96px;width:21px;height:1px;background:#c6c6c6"></div>
<div class="a" style="left:36px;width:21.5px;text-align:center;top:766.92px;font-size:11.5px;line-height:14px;color:#222">35</div>
<div class="r" style="left:36px;top:796.10px;width:21px;height:1px;background:#c6c6c6"></div>
<div class="a" style="left:36px;width:21.5px;text-align:center;top:782.06px;font-size:11.5px;line-height:14px;color:#222">36</div>
<div class="r" style="left:36px;top:811.24px;width:21px;height:1px;background:#c6c6c6"></div>
<div class="a" style="left:36px;width:21.5px;text-align:center;top:797.20px;font-size:11.5px;line-height:14px;color:#222">37</div>
<div class="r" style="left:36px;top:826.38px;width:21px;height:1px;background:#c6c6c6"></div>
<div class="a" style="left:36px;width:21.5px;text-align:center;top:812.34px;font-size:11.5px;line-height:14px;color:#222">38</div>
<div class="r" style="left:7px;top:434.5px;width:1.3px;height:59px;background:#888"></div>
<div class="r" style="left:7px;top:434.5px;width:5px;height:1.3px;background:#888"></div>
<div class="r" style="left:23px;top:440.24px;width:1.2px;height:1.2px;background:#777"></div>
<div class="r" style="left:23px;top:455.38px;width:1.2px;height:1.2px;background:#777"></div>
<div class="r" style="left:23px;top:470.52px;width:1.2px;height:1.2px;background:#777"></div>
<div class="r" style="left:23px;top:485.66px;width:1.2px;height:1.2px;background:#777"></div>
<div class="r" style="left:2px;top:494.5px;width:16px;height:13px;border-left:1px solid #999;border-right:1px solid #999;box-sizing:border-box"></div>
<div class="r" style="left:7px;top:500.5px;width:7px;height:1.5px;background:#444"></div>
<div class="r" style="left:7px;top:556px;width:1.3px;height:270px;background:#888"></div>
<div class="r" style="left:7px;top:556px;width:5px;height:1.3px;background:#888"></div>
<div class="r" style="left:23px;top:561.36px;width:1.2px;height:1.2px;background:#777"></div>
<div class="r" style="left:23px;top:576.50px;width:1.2px;height:1.2px;background:#777"></div>
<div class="r" style="left:23px;top:591.64px;width:1.2px;height:1.2px;background:#777"></div>
<div class="r" style="left:23px;top:606.78px;width:1.2px;height:1.2px;background:#777"></div>
<div class="r" style="left:23px;top:621.92px;width:1.2px;height:1.2px;background:#777"></div>
<div class="r" style="left:23px;top:637.06px;width:1.2px;height:1.2px;background:#777"></div>
<div class="r" style="left:23px;top:652.20px;width:1.2px;height:1.2px;background:#777"></div>
<div class="r" style="left:23px;top:667.34px;width:1.2px;height:1.2px;background:#777"></div>
<div class="r" style="left:23px;top:682.48px;width:1.2px;height:1.2px;background:#777"></div>
<div class="r" style="left:23px;top:697.62px;width:1.2px;height:1.2px;background:#777"></div>
<div class="r" style="left:23px;top:712.76px;width:1.2px;height:1.2px;background:#777"></div>
<div class="r" style="left:23px;top:727.90px;width:1.2px;height:1.2px;background:#777"></div>
<div class="r" style="left:23px;top:743.04px;width:1.2px;height:1.2px;background:#777"></div>
<div class="r" style="left:23px;top:758.18px;width:1.2px;height:1.2px;background:#777"></div>
<div class="r" style="left:23px;top:773.32px;width:1.2px;height:1.2px;background:#777"></div>
<div class="r" style="left:23px;top:788.46px;width:1.2px;height:1.2px;background:#777"></div>
<div class="r" style="left:23px;top:803.60px;width:1.2px;height:1.2px;background:#777"></div>
<div class="r" style="left:23px;top:818.74px;width:1.2px;height:1.2px;background:#777"></div>
<div class="r" style="left:0;top:402px;width:1445px;height:1px;background:#9b9b9b"></div>
<div class="r" style="left:507.8px;top:251.56px;width:1px;height:568.5px;background:#9b9b9b"></div>
<div class="r" style="left:1414.5px;top:613.5px;width:40px;height:17px;border:2px solid #217346;box-sizing:border-box"></div>
<div class="r" style="left:0;top:819.3px;width:1445px;height:24.7px;background:#e6e6e6;border-top:1px solid #c6c6c6;border-bottom:1px solid #d6d6d6;box-sizing:border-box"></div>
<svg style="left:22px;top:827px" width="7" height="10" viewBox="0 0 7 10"><path d="M6 0.5 L1 5 L6 9.5" fill="none" stroke="#b8b8b8" stroke-width="1.3"/></svg>
<svg style="left:46px;top:827px" width="7" height="10" viewBox="0 0 7 10"><path d="M1 0.5 L6 5 L1 9.5" fill="none" stroke="#b8b8b8" stroke-width="1.3"/></svg>
<div class="r" style="left:87px;top:822px;width:1px;height:20px;background:#aaa"></div>
<div class="r" style="left:89.2px;top:821.6px;width:55px;height:19.6px;background:#1ea7e0"></div>
<div class="a" style="left:89.2px;width:55px;text-align:center;top:821px;font-size:14px;line-height:17px;color:#111">Cover</div>
<div class="r" style="left:145.3px;top:820.5px;width:81.5px;height:21.5px;background:#fff;border-left:1px solid #c6c6c6;border-right:1px solid #c6c6c6;box-sizing:border-box"></div>
<div class="r" style="left:146px;top:839.5px;width:80.5px;height:2.5px;background:#217346"></div>
<div class="a" style="left:145.3px;width:81.5px;text-align:center;top:820.8px;font-size:14px;line-height:17px;color:#217346;font-weight:bold">Build-Up</div>
<div class="a" style="left:237.4px;top:821px;font-size:13.6px;line-height:17px;color:#444">FS</div>
<div class="a" style="left:274px;top:821px;font-size:13.6px;line-height:17px;color:#444">DCF</div>
<div class="a" style="left:321.7px;top:821px;font-size:13.6px;line-height:17px;color:#444">WACC</div>
<div class="r" style="left:263.5px;top:823.5px;width:1px;height:17px;background:#aaa"></div>
<div class="r" style="left:311px;top:823.5px;width:1px;height:17px;background:#aaa"></div>
<div class="r" style="left:373.7px;top:823.5px;width:1px;height:17px;background:#aaa"></div>
<div class="r" style="left:401.6px;top:823.8px;width:16.6px;height:16.6px;border-radius:50%;border:1.2px solid #777;box-sizing:border-box"></div>
<div class="r" style="left:405.4px;top:831.4px;width:9px;height:1.4px;background:#666"></div>
<div class="r" style="left:409.2px;top:827.6px;width:1.4px;height:9px;background:#666"></div>
<div class="r" style="left:967.8px;top:825.5px;width:2px;height:2px;background:#aaa"></div>
<div class="r" style="left:967.8px;top:830px;width:2px;height:2px;background:#aaa"></div>
<div class="r" style="left:967.8px;top:834.5px;width:2px;height:2px;background:#aaa"></div>
<div class="r" style="left:982.6px;top:824.4px;width:470px;height:16px;background:#fff;border:1px solid #8a8a8a;box-sizing:border-box"></div>
<div class="r" style="left:998.5px;top:825px;width:1px;height:15px;background:#8a8a8a"></div>
<svg style="left:987px;top:828px" width="6" height="9" viewBox="0 0 6 9"><path d="M5 0 V9 L0 4.5 Z" fill="#222"/></svg>
<div class="r" style="left:0;top:844px;width:1445px;height:22px;background:#f3f2f1"></div>
<div class="a" style="left:12px;top:849px;font-size:12px;line-height:14px;color:#444"><span style="font-size:10.38px">Ready</span></div>
<div class="a" style="left:59.5px;top:849px;font-size:12px;line-height:14px;color:#444"><span style="font-size:10.19px">Calculate</span></div>
<svg style="left:123px;top:848px" width="16" height="16" viewBox="0 0 16 16"><circle cx="8" cy="2.5" r="1.8" fill="none" stroke="#444" stroke-width="1.1"/><path d="M1 5 C4 6 12 6 15 5 M8 6 V10 L4 15 M8 10 L9 12" fill="none" stroke="#444" stroke-width="1.1"/><path d="M10 10 L15 15 M15 10 L10 15" stroke="#444" stroke-width="1.1"/></svg>
<div class="a" style="left:143.2px;top:849px;font-size:12px;line-height:14px;color:#333;font-weight:bold"><span style="font-size:10.63px">Accessibility: Investigate</span></div>
<svg style="left:1194px;top:849px" width="16" height="14" viewBox="0 0 16 14"><rect x="0.6" y="0.6" width="13" height="9" fill="none" stroke="#555" stroke-width="1.1"/><path d="M4 12.5 H9" stroke="#555" stroke-width="1.1"/><circle cx="12" cy="10" r="3" fill="#f3f2f1" stroke="#555" stroke-width="1.1"/></svg>
<div class="a" style="left:1212px;top:849px;font-size:12px;line-height:14px;color:#444"><span style="font-size:10.71px">Display Settings</span></div>
<div class="r" style="left:1309.8px;top:844px;width:42px;height:22px;background:#d2d2d2"></div>
<svg style="left:1322.5px;top:849px" width="15" height="14" viewBox="0 0 15 14"><rect x="0.6" y="0.6" width="13.5" height="12.5" fill="none" stroke="#555" stroke-width="1.1"/><path d="M5 0.6 V13 M9.5 0.6 V13 M0.6 4.8 H14 M0.6 9 H14" stroke="#555" stroke-width="1.1"/></svg>
<svg style="left:1364.5px;top:849px" width="16" height="14" viewBox="0 0 16 14"><rect x="0.6" y="0.6" width="14.5" height="12.5" fill="none" stroke="#555" stroke-width="1.1"/><rect x="3" y="3" width="9.5" height="8" fill="none" stroke="#555" stroke-width="1"/><path d="M5 5.5 H10.5 M5 7.5 H10.5" stroke="#555" stroke-width="0.9"/></svg>
<svg style="left:1406.5px;top:849px" width="16" height="14" viewBox="0 0 16 14"><rect x="0.6" y="0.6" width="14.5" height="12.5" fill="none" stroke="#555" stroke-width="1.1"/><path d="M5.5 0.6 V7 H10 V0.6" fill="none" stroke="#555" stroke-width="1.1"/></svg>
<div class="r" style="left:1437px;top:855.5px;width:8px;height:1.2px;background:#555"></div>
</body></html>
